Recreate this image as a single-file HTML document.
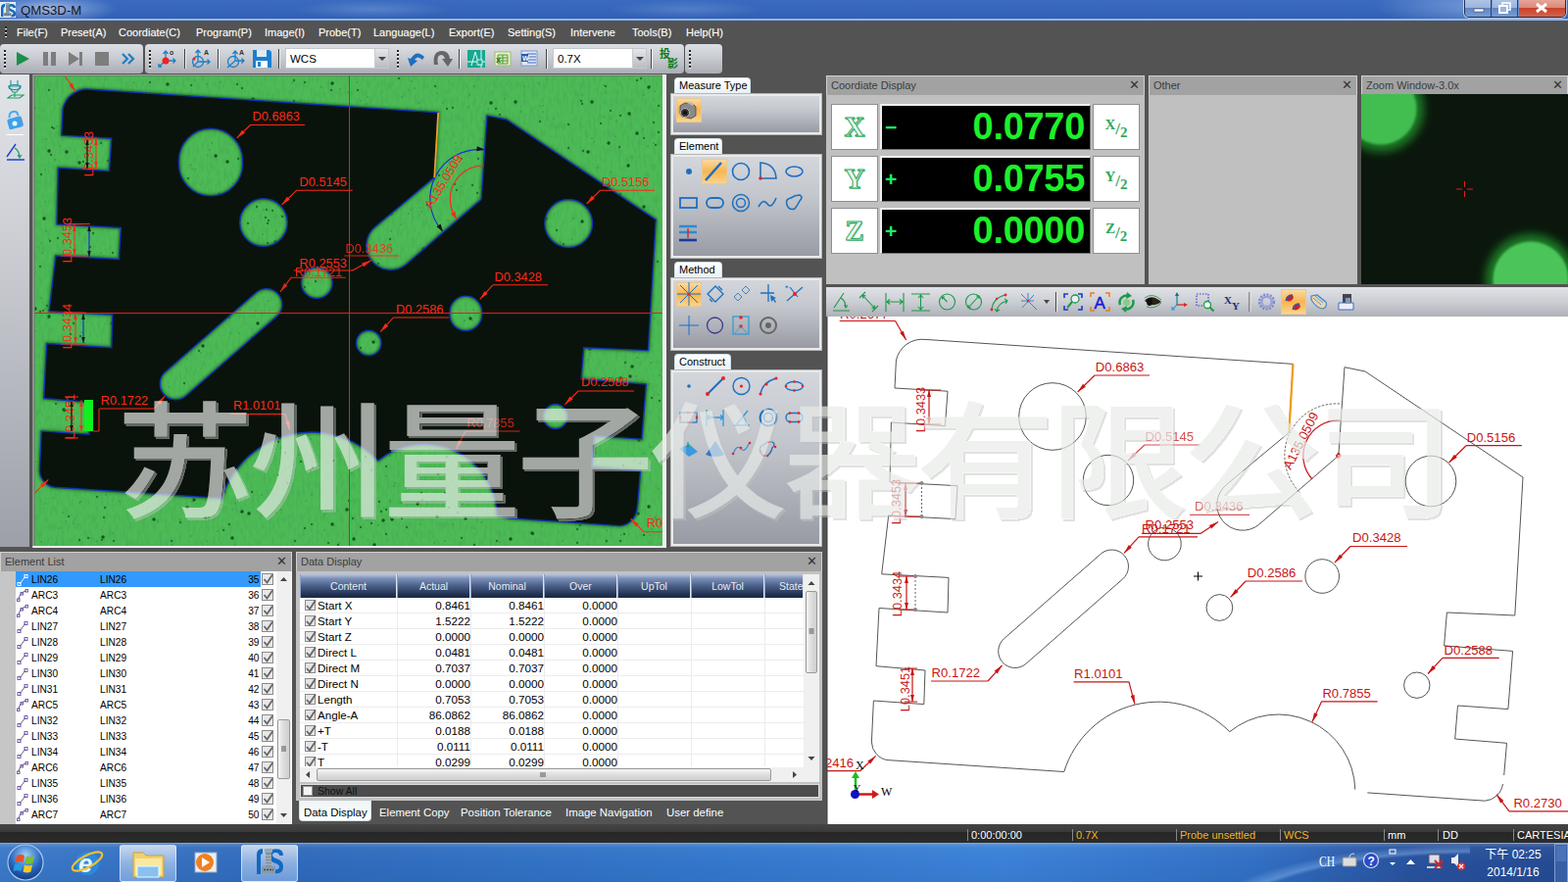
<!DOCTYPE html><html><head><meta charset="utf-8"><title>QMS3D-M</title><style>
*{box-sizing:border-box;margin:0;padding:0}
html,body{width:1600px;height:900px;overflow:hidden;background:#535353;font-family:"Liberation Sans","Noto Sans CJK SC",sans-serif;font-size:11px;color:#000}
.a{position:absolute}
.t{position:absolute;white-space:nowrap;line-height:1}
svg{position:absolute;overflow:visible}
#titlebar{left:0;top:0;width:1600px;height:21px;background:linear-gradient(#3a6bc0,#3565b9 60%,#3160b3);border-bottom:2px solid #8db4ea}
.menu{color:#fff;font-size:11px;top:28px;text-shadow:0 0 1px rgba(255,230,190,.35)}
.tb{top:45px;height:30px;border-radius:4px;background:linear-gradient(#dcdfe4,#c9ccd2 45%,#aaadb4);}
.grip{position:absolute;width:2px;background:repeating-linear-gradient(#222 0 2px,#fff 2px 3px,rgba(0,0,0,0) 3px 4px)}
.sep{position:absolute;width:1px;height:20px;top:50px;background:#444;box-shadow:1px 0 0 #eee}
.combo{position:absolute;top:49px;height:21px;background:#fff;border:1px solid #c4c7cc;font-size:11.5px;line-height:21px;padding-left:4px}
.combo i{position:absolute;right:0;top:0;width:14px;height:19px;background:linear-gradient(#e4e6ea,#b9bcc3);border-left:1px solid #ccc}
.combo i:after{content:"";position:absolute;left:3px;top:8px;border:4px solid transparent;border-top:4px solid #444;border-bottom:none}
.ptitle{position:absolute;background:#a1a2a1;color:#3c3c3c;font-size:11px;border:1px solid #d0d0d0;border-bottom:none;height:20px;line-height:18px;padding-left:4px}
.ptitle b{position:absolute;right:4px;top:0;font-weight:normal;font-size:13px;color:#333}
.pbody{position:absolute;background:#c0c0c0}
.tab{position:absolute;white-space:nowrap;overflow:hidden;background:linear-gradient(#fff,#e6f0f2);border:1px solid #cfe0e4;border-bottom:none;border-radius:4px 4px 0 0;font-size:11px;height:17px;line-height:15px;padding-left:4px;color:#000}
.box{position:absolute;border:2px solid #e9eaec;background:linear-gradient(#d3d6db,#c3c6cc 40%,#989ba4);box-shadow:0 0 0 1px #b5b5b5}
.sel{position:absolute;background:linear-gradient(#fbd9a0,#f7b552 50%,#fbd48c);border:1px solid #e8c890}
.cbtn{position:absolute;background:#fff;border:1px solid #8e8e8e;color:#2fa860;font-family:"Liberation Serif",serif;font-weight:bold;text-align:center}
.disp{position:absolute;background:#000;border:1px solid #777;border-top:2px solid #eee;border-left:2px solid #eee}
.dig{position:absolute;right:5px;top:2px;font-size:38px;font-weight:bold;color:#1df02a;line-height:1;letter-spacing:-0.3px}
.sign{position:absolute;left:3px;top:11px;font-size:21px;font-weight:bold;color:#1df06a;line-height:1}
</style></head><body>
<div id="titlebar" class="a"></div>
<div class="a" style="left:300px;top:0;width:160px;height:19px;background:radial-gradient(ellipse at center,rgba(150,180,230,.35),rgba(150,180,230,0) 70%)"></div>
<div class="a" style="left:620px;top:0;width:160px;height:19px;background:radial-gradient(ellipse at center,rgba(150,180,230,.3),rgba(150,180,230,0) 70%)"></div>
<div class="a" style="left:1380px;top:0;width:220px;height:20px;background:radial-gradient(ellipse 50% 120% at 60% 30%,rgba(170,195,235,.55),rgba(150,180,230,0) 100%)"></div>
<div class="a" style="left:-20px;top:-6px;width:140px;height:30px;background:radial-gradient(ellipse 50% 50% at 50% 50%,rgba(235,242,252,.6),rgba(200,220,245,.25) 60%,rgba(150,180,230,0) 100%)"></div>
<div class="t" style="left:21px;top:4px;font-size:13.2px;color:#151525">QMS3D-M</div>
<svg style="left:0;top:2px" width="17" height="17" viewBox="0 0 17 17"><rect x="0" y="0" width="16" height="16" fill="#e4eef8"/><path d="M1 15V6q0-4 4-4v3q-1.5 0-1.5 1.500v8.500zM11.5 2q4.5 0 4.5 4h-2.500q0-1.5-2-1.500q-1.5 0-1.5 1.200t3 2.300q3.2 1.2 3.2 4q0 3.5-4.7 3.500v-2.500q2 0 2-1.300q0-1.2-3-2.200t-3-3.800q0-3.7 4-3.700z" fill="#1468c0"/><rect x="5.5" y="1" width="4.5" height="2" fill="#9aa8b4"/><rect x="6" y="3" width="3.5" height="8" fill="#7f8f9c"/><rect x="4" y="11" width="7.5" height="3.5" fill="#8a9aa8"/><path d="M5 12.800h5.5" stroke="#445" stroke-dasharray="1.5 1"/></svg>
<div class="a" style="left:1494px;top:-4px;width:104px;height:22px;border:1px solid #1c2f55;border-radius:5px;box-shadow:0 0 0 1px rgba(255,255,255,.55);overflow:hidden;background:#6f93cc"><div class="a" style="left:0;top:0;width:27px;height:22px;background:linear-gradient(#b7c9e6 0,#9bb4dc 50%,#5f86c4 52%,#7fa2d6);border-right:1px solid #2a406c"></div><div class="a" style="left:28px;top:0;width:26px;height:22px;background:linear-gradient(#b7c9e6 0,#9bb4dc 50%,#5f86c4 52%,#7fa2d6);border-right:1px solid #2a406c"></div><div class="a" style="left:55px;top:0;width:48px;height:22px;background:linear-gradient(#eab0a4 0,#dc8878 50%,#c8422c 52%,#d86a50)"></div></div>
<svg style="left:1494px;top:0" width="104" height="18" viewBox="0 0 104 18"><rect x="10" y="9" width="10" height="3" fill="#fff" stroke="#445" stroke-width=".6"/><rect x="39" y="3" width="8" height="7" fill="none" stroke="#fff" stroke-width="1.6"/><rect x="36" y="6" width="8" height="7" fill="#9bb4dc" stroke="#fff" stroke-width="2"/><path d="M74 4l10 8M84 4l-10 8" stroke="#fff" stroke-width="3"/></svg>
<div class="t menu" style="left:17px">File(F)</div>
<div class="t menu" style="left:62px">Preset(A)</div>
<div class="t menu" style="left:121px">Coordiate(C)</div>
<div class="t menu" style="left:200px">Program(P)</div>
<div class="t menu" style="left:270px">Image(I)</div>
<div class="t menu" style="left:325px">Probe(T)</div>
<div class="t menu" style="left:381px">Language(L)</div>
<div class="t menu" style="left:458px">Export(E)</div>
<div class="t menu" style="left:518px">Setting(S)</div>
<div class="t menu" style="left:582px">Intervene</div>
<div class="t menu" style="left:645px">Tools(B)</div>
<div class="t menu" style="left:700px">Help(H)</div>
<div class="grip" style="left:5px;top:27px;height:12px"></div>
<div class="a tb" style="left:0px;width:146px"></div>
<div class="a tb" style="left:148px;width:550px"></div>
<div class="a tb" style="left:699px;width:38px"></div>
<div class="grip" style="left:4px;top:51px;height:19px"></div>
<div class="grip" style="left:152px;top:51px;height:19px"></div>
<div class="grip" style="left:405px;top:51px;height:19px"></div>
<div class="grip" style="left:703px;top:51px;height:19px"></div>
<div class="sep" style="left:188px"></div>
<div class="sep" style="left:222px"></div>
<div class="sep" style="left:284px"></div>
<div class="sep" style="left:468px"></div>
<div class="sep" style="left:557px"></div>
<div class="sep" style="left:664px"></div>
<div class="combo" style="left:291px;width:106px">WCS<i></i></div>
<div class="combo" style="left:564px;width:96px">0.7X<i></i></div>
<div class="t" style="left:673px;top:50px;font-size:11px;color:#0a7a1a;line-height:10px;font-weight:bold">投<br><span style="margin-left:8px">影</span></div>
<svg style="left:0;top:45px" width="740" height="30" viewBox="0 45 740 30">
<path d="M17 53l13 7l-13 7z" fill="#1a9048"/>
<rect x="44" y="53" width="5" height="14" fill="#7d7d7d"/><rect x="52" y="53" width="5" height="14" fill="#7d7d7d"/>
<path d="M70 53l11 7l-11 7z" fill="#7d7d7d"/><rect x="81" y="53" width="3" height="14" fill="#7d7d7d"/>
<rect x="97" y="53" width="14" height="14" fill="#7d7d7d"/>
<path d="M125 55l5 5l-5 5M131 55l5 5l-5 5" stroke="#1e7fc4" stroke-width="2.2" fill="none"/>
<g stroke="#1e7fc4" stroke-width="1.3" fill="none"><path d="M169 62v-10M166.5 55l2.5-3l2.5 3M169 62l-7 6M162 65v3h3M169 62h10M176.5 59.500l2.5 2.500l-2.5 2.5"/></g><circle cx="169" cy="62" r="3.5" fill="#e22"/><text x="173" y="56" font-size="7" fill="#333" font-weight="bold">o</text>
<g stroke="#1e7fc4" stroke-width="1.3" fill="none"><circle cx="202" cy="63" r="5.5"/><path d="M202 63v-12M199.5 54l2.5-3l2.5 3M202 63h12M211.5 60.500l2.5 2.500l-2.5 2.500M202 63l-5 5"/></g><circle cx="198" cy="60" r="1.5" fill="#e22"/><text x="208" y="56" font-size="7" fill="#333" font-weight="bold">A</text>
<g stroke="#1e7fc4" stroke-width="1.3" fill="none"><circle cx="238" cy="63" r="5.5"/><path d="M240 62v-10M237.5 55l2.5-3l2.5 3M240 62h9M246.5 59.500l2.5 2.500l-2.5 2.500M240 62l-8 7"/></g><text x="244" y="56" font-size="7" fill="#333" font-weight="bold">A</text>
<path d="M258 51h17l2 2v16h-19z" fill="#1b7fd0"/><rect x="262" y="51" width="10" height="7" fill="#dfeaf4"/><rect x="261" y="62" width="12" height="7" fill="#fff"/><rect x="263" y="63" width="3" height="5" fill="#1b7fd0"/>
<path d="M417 58q8-8 14 2l3-1l-3 9l-7-6l3-1q-3-5-8 0z" fill="#1e6fc0" transform="translate(850 0) scale(-1 1)"/>
<path d="M443 66q-2-14 8-14q7 0 8 8h3l-5 8l-6-8h3q-1-4-4-4q-5 0-3 10z" fill="#666"/>
<rect x="477" y="51" width="18" height="18" fill="#18a890"/><path d="M481 67l4-14l4 14M477 63h18M491 51v18" stroke="#dff" stroke-width="1" fill="none"/><rect x="487" y="61" width="5" height="5" fill="#18a890" stroke="#fff" stroke-width=".8"/>
<rect x="505" y="53" width="16" height="14" fill="#e7f1dc" stroke="#9bbf6a"/><path d="M508 56h10v9h-10zM508 59h10M508 62h10M513 56v9" stroke="#5a9a2a" stroke-width="1" fill="#d7ebc0"/><text x="506" y="64" font-size="9" font-weight="bold" fill="#2a7a1a">x</text>
<rect x="532" y="52" width="16" height="15" fill="#dfe9f8" stroke="#7a9ad0"/><path d="M538 55h9M538 58h9M538 61h9M538 64h9" stroke="#3a6ab8" stroke-width="1.2"/><rect x="532" y="55" width="7" height="8" fill="#2a5aa8"/><text x="533" y="62" font-size="7" font-weight="bold" fill="#fff">W</text>
</svg>
<div class="a" style="left:0;top:76px;width:30px;height:482px;background:linear-gradient(#e2e4e8,#ccced4 35%,#9da0a8)"></div>
<svg style="left:0;top:76px" width="30" height="110" viewBox="0 76 30 110">
<g stroke="#1aa06a" stroke-width="1.1" fill="none"><path d="M11 82v5M18 82v5M9 88h12l-4 6h-4zM15 94v5"/><ellipse cx="15" cy="89" rx="6" ry="2.5" stroke="#1e7fc4"/><path d="M8 100l4-3h12l-4 3z"/></g>
<rect x="8" y="120" width="15" height="11" rx="2" fill="#3fa0ea" transform="rotate(-15 15 125)"/><path d="M11 119q1-6 6-5q4 1 3 5" stroke="#4aa8f0" stroke-width="2" fill="none" transform="rotate(-15 15 125)"/><circle cx="15" cy="126" r="2.5" fill="#dff"/>
<path d="M6 137.500h18" stroke="#fff" stroke-width="1"/>
<path d="M7 163h18" stroke="#1e40d0" stroke-width="1.5"/><path d="M7 160l9-13" stroke="#1e40d0" stroke-width="1.4"/><path d="M15 151q5 3 5 10M18 158l2 3l2-3" stroke="#1aa06a" stroke-width="1.2" fill="none"/>
</svg>
<svg style="left:0;top:0" width="1600" height="900" viewBox="0 0 1600 900">
<defs>
<filter id="spk" x="0" y="0" width="100%" height="100%"><feTurbulence type="fractalNoise" baseFrequency="0.11" numOctaves="2" seed="7" result="n"/><feColorMatrix in="n" type="matrix" values="0 0 0 0 0  0 0 0 0 0.250  0 0 0 0 0  -9 0 0 0 2.6"/></filter>
<filter id="tex" x="0" y="0" width="100%" height="100%"><feTurbulence type="fractalNoise" baseFrequency="0.5" numOctaves="1" seed="3"/><feColorMatrix type="matrix" values="0 0 0 0 0  0 0 0 0 0  0 0 0 0 0  0.350 0 0 0 -0.080"/></filter>
<filter id="tex2" x="0" y="0" width="100%" height="100%"><feTurbulence type="fractalNoise" baseFrequency="0.35 0.12" numOctaves="2" seed="5"/><feColorMatrix type="matrix" values="0 0 0 0 0.050  0 0 0 0 0.3  0 0 0 0 0.080  0 0.8 0 0 -0.320"/></filter><filter id="bl2"><feGaussianBlur stdDeviation="1.6"/></filter>
<clipPath id="camclip"><rect x="35.5" y="77.6" width="640.5" height="479.4"/></clipPath>
</defs>
<rect x="33.3" y="76" width="646.7" height="483" fill="#a6a6a6"/><rect x="34.7" y="77" width="645.3" height="482" fill="#666"/><rect x="676" y="76" width="4" height="483" fill="#efefef"/><rect x="33.3" y="557" width="646.7" height="2" fill="#efefef"/>
<g clip-path="url(#camclip)">
<rect x="35" y="77" width="641" height="480" fill="#4cbb55"/>
<rect x="35" y="77" width="641" height="480" filter="url(#tex2)"/>
<path d="M325 346h.1M627 301h.1M361 359h.1M153 323h.1M439 458h.1M95 223h.1M93 466h.1M479 97h.1M665 540h.1M454 372h.1M136 84h.1M374 106h.1M157 193h.1M54 300h.1M317 481h.1M368 384h.1M355 395h.1M328 211h.1M674 555h.1M574 417h.1M237 187h.1M220 111h.1M526 269h.1M578 263h.1M649 484h.1M35 178h.1M618 303h.1M663 268h.1M82 379h.1M534 206h.1M91 237h.1M653 441h.1M111 195h.1M100 106h.1M546 162h.1M394 292h.1M157 428h.1M119 386h.1M110 279h.1M171 207h.1M657 463h.1M230 502h.1M170 266h.1M583 385h.1M99 552h.1M172 201h.1M530 235h.1M225 112h.1M93 357h.1M191 366h.1M273 295h.1M650 309h.1M403 493h.1M152 151h.1M617 470h.1M195 168h.1M509 528h.1M161 533h.1M600 367h.1M305 127h.1M60 539h.1M188 415h.1M200 472h.1M417 218h.1M147 423h.1M79 187h.1M394 486h.1M429 212h.1M623 175h.1M46 206h.1M321 106h.1M148 254h.1M402 140h.1M267 505h.1M663 392h.1M478 358h.1M125 94h.1M46 514h.1M484 539h.1M49 382h.1M344 428h.1M239 557h.1M83 339h.1M507 509h.1M507 415h.1M543 516h.1M261 406h.1M612 495h.1M302 456h.1M588 352h.1M436 261h.1M408 369h.1M86 384h.1M672 499h.1M502 263h.1M506 356h.1M317 479h.1M89 437h.1M54 366h.1M343 188h.1M483 316h.1M429 519h.1M199 82h.1M228 403h.1M165 158h.1M616 394h.1M318 505h.1M245 397h.1M162 284h.1M552 516h.1M599 262h.1M409 229h.1M122 315h.1M572 484h.1M491 533h.1M212 158h.1M324 209h.1M172 276h.1M436 314h.1M237 480h.1M664 294h.1M83 92h.1M594 97h.1M489 351h.1M233 457h.1M47 142h.1M327 89h.1M567 191h.1M125 100h.1M438 291h.1M439 391h.1M553 537h.1M474 173h.1M340 163h.1M42 304h.1M493 163h.1M210 243h.1M482 327h.1M429 440h.1M287 457h.1M616 119h.1M633 424h.1M118 295h.1M436 514h.1M277 350h.1M599 459h.1M640 300h.1M452 175h.1M498 470h.1M446 421h.1M172 509h.1M663 546h.1M379 457h.1M240 514h.1M584 244h.1M88 289h.1M388 446h.1M347 91h.1M554 108h.1M548 160h.1M250 455h.1M125 148h.1M366 424h.1M573 408h.1M641 313h.1M643 118h.1M177 330h.1M221 427h.1M445 328h.1M576 346h.1M235 260h.1M577 509h.1M168 485h.1M656 329h.1M402 173h.1M379 319h.1M423 90h.1M656 325h.1M292 462h.1M396 313h.1M478 109h.1M380 276h.1M648 520h.1M208 304h.1M116 285h.1M558 509h.1M340 229h.1M158 374h.1M628 139h.1M535 88h.1M159 186h.1M475 232h.1M263 374h.1M102 428h.1M114 322h.1M196 172h.1M375 287h.1M276 275h.1M374 154h.1M166 380h.1M444 331h.1M581 371h.1M584 189h.1M510 466h.1M614 229h.1M237 520h.1M175 556h.1M604 141h.1M188 426h.1M201 124h.1M568 279h.1M541 137h.1M293 406h.1M46 173h.1M472 514h.1M656 132h.1M359 441h.1M357 406h.1M156 111h.1M103 95h.1M389 324h.1M400 147h.1M153 175h.1M574 552h.1M629 123h.1M75 534h.1M331 444h.1M244 301h.1M365 283h.1M420 83h.1M484 482h.1M151 295h.1M509 272h.1M160 156h.1M364 84h.1M608 462h.1M487 490h.1M438 271h.1M419 319h.1M665 463h.1M201 514h.1M512 450h.1M557 272h.1M610 499h.1M480 445h.1M526 272h.1M498 111h.1M254 302h.1M42 248h.1M444 377h.1M184 530h.1M462 239h.1M458 350h.1M377 264h.1M676 385h.1M485 443h.1M663 88h.1M429 432h.1M200 270h.1M67 171h.1M276 124h.1M196 512h.1M388 321h.1M655 350h.1M673 383h.1M554 114h.1M418 441h.1M64 523h.1M138 303h.1M143 315h.1M427 105h.1M641 279h.1M373 364h.1M269 214h.1M455 346h.1M217 421h.1M225 84h.1M192 98h.1M135 439h.1M285 508h.1M515 101h.1M669 530h.1M82 512h.1M310 306h.1M659 194h.1M370 527h.1M498 302h.1M662 469h.1M422 132h.1M435 296h.1M166 102h.1M374 137h.1M319 398h.1M327 203h.1M408 278h.1M534 332h.1M674 534h.1M506 191h.1M108 505h.1M538 377h.1M265 207h.1M474 348h.1M414 381h.1M518 168h.1M195 547h.1M622 499h.1M60 106h.1M209 281h.1M435 126h.1M382 112h.1M90 402h.1M388 380h.1M274 307h.1M170 242h.1M512 480h.1M83 134h.1M554 376h.1M528 179h.1M307 201h.1M554 254h.1M454 552h.1M244 340h.1M513 519h.1M309 254h.1M97 497h.1M85 117h.1M397 310h.1M474 220h.1M532 114h.1M172 395h.1M87 223h.1M500 410h.1M216 146h.1M264 425h.1M270 133h.1M490 350h.1M624 528h.1M620 287h.1M550 223h.1M239 269h.1M634 506h.1M194 251h.1M269 251h.1M289 263h.1M160 348h.1M546 336h.1M571 347h.1M148 441h.1M600 212h.1M49 325h.1M384 349h.1M654 390h.1M551 108h.1M386 455h.1M89 116h.1M507 509h.1M89 381h.1M127 435h.1M451 195h.1M176 444h.1M369 444h.1M288 239h.1M656 400h.1M351 335h.1M497 417h.1M622 274h.1M565 397h.1M582 464h.1M569 504h.1M649 384h.1M371 418h.1M549 279h.1M305 147h.1M510 553h.1M276 157h.1M166 281h.1M222 542h.1M73 225h.1M109 388h.1M532 163h.1M75 297h.1M409 513h.1M58 129h.1M153 181h.1M186 421h.1M416 185h.1M154 212h.1M146 441h.1M235 340h.1M559 307h.1M202 503h.1M621 241h.1M386 536h.1M344 183h.1M67 532h.1M549 262h.1M373 325h.1M211 552h.1M456 191h.1M42 304h.1M273 459h.1M492 368h.1M136 152h.1M241 202h.1M592 325h.1M443 554h.1M206 334h.1M132 447h.1M36 471h.1M577 472h.1M88 207h.1M494 124h.1M343 302h.1M647 359h.1M585 223h.1M541 277h.1M623 121h.1M565 177h.1M383 329h.1M136 476h.1M235 226h.1M84 224h.1M334 420h.1M266 407h.1M103 266h.1M331 541h.1M567 391h.1M43 258h.1M490 191h.1M397 297h.1M42 553h.1M547 176h.1M430 216h.1M276 336h.1M226 239h.1M286 397h.1M199 173h.1M504 235h.1M641 347h.1M499 236h.1M565 121h.1M125 122h.1M469 417h.1M150 270h.1M571 362h.1M93 186h.1M136 137h.1M296 112h.1M625 282h.1M363 388h.1M527 471h.1M282 236h.1M299 84h.1M292 413h.1M664 456h.1M458 369h.1M47 236h.1M254 389h.1M103 258h.1M362 456h.1M564 370h.1M136 445h.1M614 340h.1M261 317h.1M126 419h.1M668 325h.1M494 478h.1M161 531h.1M437 172h.1M88 194h.1M405 412h.1M246 523h.1M267 299h.1M115 544h.1M122 511h.1M383 346h.1M394 204h.1M618 553h.1M559 366h.1M114 473h.1M220 508h.1M189 352h.1M568 166h.1M386 114h.1M56 163h.1M668 528h.1M457 225h.1M465 431h.1M280 361h.1M550 85h.1M163 302h.1M127 262h.1M400 160h.1M368 204h.1M399 236h.1M446 95h.1M465 146h.1M650 365h.1M336 274h.1M435 408h.1M521 438h.1M346 554h.1M572 487h.1M297 285h.1M398 512h.1M372 329h.1M312 511h.1M241 103h.1M500 509h.1M504 364h.1M517 223h.1M415 111h.1M115 292h.1M357 267h.1M68 411h.1M372 192h.1M231 267h.1M186 110h.1M619 541h.1M462 493h.1M305 464h.1M177 435h.1M398 511h.1M98 457h.1M114 335h.1M645 77h.1M191 221h.1M243 107h.1M609 468h.1M290 248h.1M410 99h.1M55 508h.1M232 316h.1M634 546h.1M338 176h.1M224 520h.1M610 171h.1M572 247h.1M338 160h.1M599 555h.1M164 381h.1M158 499h.1M67 128h.1M500 227h.1M612 494h.1M492 142h.1M481 527h.1M320 115h.1M178 224h.1M490 171h.1M151 190h.1M461 456h.1M274 395h.1M602 360h.1M182 221h.1M629 397h.1M212 384h.1M93 549h.1M317 331h.1M375 99h.1M419 214h.1M196 463h.1M91 214h.1M519 195h.1M214 340h.1M154 508h.1M668 93h.1M331 437h.1M282 523h.1M355 163h.1M391 387h.1M266 393h.1M537 325h.1M359 483h.1M474 327h.1M645 160h.1M535 156h.1M425 190h.1M317 448h.1M539 457h.1M186 312h.1M177 355h.1M355 94h.1M418 420h.1M402 496h.1M150 150h.1M46 315h.1M314 289h.1M204 460h.1M81 513h.1M400 338h.1M542 191h.1M129 226h.1M62 228h.1M433 329h.1M205 360h.1M92 471h.1M145 199h.1M137 409h.1M568 455h.1M74 274h.1M269 181h.1M657 97h.1M349 442h.1M667 146h.1M327 435h.1M60 192h.1M606 145h.1M287 220h.1M307 114h.1M57 555h.1M524 429h.1M182 199h.1M389 193h.1M331 525h.1M268 239h.1M664 370h.1M60 270h.1M452 105h.1M255 410h.1M589 361h.1M603 299h.1M287 482h.1M279 452h.1M173 244h.1M153 341h.1M140 175h.1M172 302h.1M233 292h.1M672 403h.1M588 175h.1M280 112h.1M478 251h.1M211 86h.1M152 203h.1M287 520h.1M493 206h.1M266 151h.1M635 250h.1M526 424h.1M616 87h.1M241 262h.1M88 501h.1M243 447h.1M368 103h.1M288 191h.1M61 149h.1M417 92h.1M235 281h.1M384 142h.1M488 202h.1M500 397h.1M129 175h.1M215 419h.1M295 263h.1M590 186h.1M222 243h.1M173 97h.1M51 380h.1M398 465h.1M660 220h.1M465 518h.1M174 408h.1M462 535h.1M592 190h.1M440 120h.1M309 265h.1M74 261h.1M245 316h.1M214 153h.1M293 305h.1M142 396h.1M189 122h.1M254 280h.1M132 357h.1M485 343h.1M484 88h.1M286 252h.1M75 271h.1M70 315h.1M411 302h.1M244 199h.1M50 244h.1M607 349h.1M203 398h.1M154 302h.1M429 535h.1M267 354h.1M639 447h.1M437 375h.1M298 276h.1M212 475h.1M599 260h.1M618 95h.1M122 320h.1M233 250h.1M661 149h.1M158 187h.1M471 190h.1M36 338h.1" stroke="#2f9038" stroke-width="1.4" stroke-linecap="round" fill="none"/>
<path d="M287 192h.1M351 389h.1M386 377h.1M394 476h.1M656 237h.1M257 502h.1M236 421h.1M481 407h.1M653 473h.1M137 375h.1M350 348h.1M272 214h.1M515 333h.1M187 197h.1M243 162h.1M364 137h.1M76 110h.1M101 415h.1M107 294h.1M530 308h.1M139 493h.1M593 103h.1M198 321h.1M546 265h.1M494 198h.1M494 234h.1M249 441h.1M575 475h.1M399 279h.1M488 376h.1M568 462h.1M115 258h.1M464 188h.1M153 84h.1M410 529h.1M657 141h.1M476 278h.1M440 267h.1M633 552h.1M66 419h.1M111 97h.1M218 428h.1M672 135h.1M247 90h.1M383 309h.1M274 225h.1M548 480h.1M217 265h.1M431 444h.1M664 264h.1M480 339h.1M548 148h.1M147 128h.1M633 198h.1M348 135h.1M242 86h.1M398 146h.1M436 209h.1M181 308h.1M270 202h.1M68 108h.1M607 225h.1M85 165h.1M345 556h.1M165 493h.1M345 276h.1M552 267h.1M72 341h.1M456 376h.1M213 528h.1M589 554h.1M319 477h.1M500 161h.1M52 158h.1M111 113h.1M265 439h.1M234 324h.1M42 178h.1M650 82h.1M373 466h.1M543 430h.1M291 462h.1M566 445h.1M667 125h.1M644 270h.1M487 197h.1M618 88h.1M405 186h.1M284 254h.1M456 466h.1M269 383h.1M262 211h.1M615 231h.1M95 238h.1M510 178h.1M511 339h.1M471 162h.1M103 146h.1M260 284h.1M41 318h.1M294 231h.1M379 534h.1M166 500h.1M241 439h.1M104 551h.1M311 539h.1M176 273h.1M488 162h.1M210 402h.1M642 232h.1M153 248h.1M669 148h.1M442 258h.1M448 179h.1M430 503h.1M584 379h.1M359 350h.1M108 479h.1M477 295h.1M462 278h.1M282 187h.1M420 352h.1M365 92h.1M437 291h.1M415 362h.1M632 150h.1M335 554h.1M508 227h.1M507 552h.1M293 493h.1M116 552h.1M350 189h.1M574 389h.1M636 475h.1M546 323h.1M672 108h.1M593 419h.1M196 464h.1M326 334h.1M590 171h.1M214 386h.1M82 343h.1M540 313h.1M190 461h.1M583 447h.1M387 512h.1M546 150h.1M270 125h.1M59 243h.1M589 477h.1M110 164h.1M284 485h.1M431 510h.1M81 551h.1M168 379h.1M597 426h.1M161 398h.1M311 84h.1M253 228h.1M439 211h.1M422 411h.1M151 138h.1M480 301h.1M118 133h.1M638 370h.1M264 171h.1M673 409h.1M507 250h.1M234 273h.1M129 380h.1M307 471h.1M297 296h.1M360 529h.1M257 415h.1M186 355h.1M218 496h.1M219 487h.1M469 295h.1M633 263h.1M511 366h.1M322 108h.1M304 212h.1M318 535h.1M223 411h.1M466 194h.1M299 140h.1M609 198h.1M305 241h.1M561 485h.1M414 339h.1M99 507h.1M92 252h.1M275 424h.1M464 242h.1M611 533h.1M50 381h.1M336 251h.1M333 229h.1M465 368h.1M657 546h.1M671 267h.1M566 389h.1M484 556h.1M78 299h.1M292 392h.1M175 552h.1M169 255h.1M127 266h.1M510 117h.1M142 388h.1M434 433h.1M197 466h.1M503 449h.1M112 302h.1M45 490h.1M640 507h.1M51 246h.1M379 333h.1M106 456h.1M228 321h.1M115 350h.1M118 119h.1M363 218h.1M533 195h.1M300 103h.1M175 294h.1M393 298h.1M580 127h.1M580 151h.1M657 329h.1M296 371h.1M589 540h.1M300 82h.1M134 470h.1M506 419h.1M135 332h.1M53 130h.1M228 541h.1M447 484h.1M65 277h.1M85 202h.1M107 518h.1M246 312h.1M454 503h.1M642 350h.1M356 511h.1M288 221h.1M509 201h.1M271 283h.1M341 249h.1M311 293h.1M67 478h.1M75 330h.1M386 269h.1M178 125h.1M273 228h.1M345 188h.1M515 311h.1M41 272h.1M654 80h.1M415 538h.1M269 364h.1M271 222h.1M425 360h.1M237 316h.1M366 439h.1M69 122h.1M197 207h.1M545 281h.1M586 270h.1M218 403h.1M90 549h.1M568 235h.1M238 470h.1M540 385h.1M71 444h.1M66 377h.1M389 522h.1M444 88h.1M634 438h.1M407 80h.1M507 278h.1M471 549h.1M623 113h.1M536 288h.1M517 258h.1M322 287h.1M111 231h.1M506 111h.1M109 477h.1M462 340h.1M108 134h.1M234 535h.1M394 520h.1M170 276h.1M379 480h.1M114 496h.1M338 92h.1M312 258h.1M467 523h.1M351 408h.1M284 451h.1M102 433h.1M142 358h.1M165 243h.1M140 245h.1M414 327h.1M284 353h.1M575 249h.1M409 308h.1M664 234h.1M482 189h.1M202 428h.1M404 200h.1M76 473h.1M277 421h.1M312 373h.1M394 545h.1M618 296h.1M347 188h.1M518 126h.1M231 484h.1M57 412h.1M399 342h.1M248 150h.1M644 444h.1M551 124h.1M538 182h.1M163 334h.1M426 135h.1M525 357h.1M612 520h.1M477 252h.1M645 422h.1M221 489h.1M501 204h.1M195 87h.1M379 199h.1M223 198h.1M119 310h.1M210 214h.1M213 321h.1M595 154h.1M586 487h.1M426 338h.1M505 334h.1M458 518h.1M532 202h.1M70 527h.1M267 455h.1M185 294h.1M272 427h.1M640 320h.1M398 244h.1M184 533h.1M106 528h.1M456 111h.1M613 126h.1M397 134h.1M669 225h.1M594 106h.1M462 110h.1M54 351h.1M665 406h.1M583 454h.1M369 114h.1M373 166h.1M373 247h.1M355 172h.1M487 277h.1M346 115h.1M347 345h.1M658 346h.1M121 221h.1M250 414h.1M637 545h.1M644 521h.1M585 526h.1M48 312h.1M414 406h.1M428 371h.1M633 118h.1M368 538h.1M55 131h.1M592 536h.1M50 92h.1M567 407h.1M368 355h.1M520 465h.1M35 110h.1M544 545h.1M569 273h.1M250 243h.1M45 447h.1M203 358h.1M372 238h.1M468 295h.1M185 500h.1M148 149h.1M197 307h.1M537 237h.1M188 391h.1M202 328h.1M198 498h.1M153 188h.1M228 235h.1M501 401h.1M542 336h.1M85 443h.1M192 182h.1M301 552h.1M273 248h.1M619 552h.1M283 142h.1M541 453h.1M252 456h.1M278 215h.1M415 433h.1M340 470h.1M44 317h.1" stroke="#1f7429" stroke-width="2.3" stroke-linecap="round" fill="none"/>
<path d="M279 108h.1M621 146h.1M167 499h.1M651 524h.1M254 524h.1M126 420h.1M641 169h.1M122 403h.1M601 426h.1M643 295h.1M274 135h.1M210 528h.1M81 166h.1M258 101h.1M232 165h.1M114 330h.1M381 349h.1M524 330h.1M642 116h.1M178 114h.1M233 442h.1M627 319h.1M138 236h.1M399 218h.1M543 544h.1M330 366h.1M577 300h.1M157 530h.1M662 89h.1M524 269h.1M68 155h.1M146 430h.1M171 86h.1M176 461h.1M355 390h.1M333 165h.1M45 223h.1M62 202h.1M432 254h.1M338 376h.1M238 248h.1M602 356h.1M302 336h.1M330 237h.1M621 189h.1M635 486h.1M600 155h.1M361 550h.1M220 159h.1M499 190h.1M409 153h.1M642 213h.1M97 407h.1M257 345h.1M354 520h.1M365 259h.1M36 315h.1M207 353h.1M440 299h.1M93 316h.1M344 385h.1M657 211h.1M319 118h.1M548 190h.1M566 460h.1M198 510h.1M358 282h.1M391 531h.1M349 308h.1M221 481h.1M357 241h.1M161 180h.1M570 463h.1M662 517h.1M474 460h.1M491 466h.1M549 162h.1M557 223h.1M191 518h.1M50 323h.1M255 457h.1M426 514h.1M633 386h.1M76 397h.1M105 548h.1M594 226h.1M154 410h.1M521 550h.1M434 137h.1M501 105h.1M591 446h.1M538 496h.1M400 530h.1M445 313h.1M281 247h.1M50 154h.1M545 187h.1M454 449h.1M480 325h.1M238 208h.1M155 388h.1M475 529h.1M247 522h.1M619 216h.1M645 374h.1M652 449h.1M249 211h.1M370 311h.1M58 491h.1M378 304h.1M512 197h.1M163 356h.1M190 234h.1M80 102h.1M263 330h.1M643 384h.1M301 272h.1M186 304h.1M650 136h.1M313 406h.1M524 343h.1M446 527h.1M614 198h.1M382 556h.1M373 168h.1M526 104h.1M131 342h.1M210 422h.1M501 230h.1M527 388h.1M488 296h.1M312 128h.1M339 535h.1M604 104h.1M81 206h.1M480 287h.1M117 281h.1M402 434h.1M293 389h.1M472 373h.1M65 418h.1M117 103h.1M339 85h.1M82 265h.1M335 128h.1M646 486h.1M347 359h.1M237 549h.1M112 223h.1M177 493h.1" stroke="#13561c" stroke-width="3.3" stroke-linecap="round" fill="none"/>
<path d="M92.1 91.2L447.2 114.9L443.3 181.1L383.1 231.2A23.5 23.5 0 0 0 414.2 270.0L491.1 203.4L497.0 118.0L516.8 122.0L669.2 224.2L661.4 357.6L595.7 354.8L593.1 386.8L659.3 392.1L654.9 448.1L606.2 444.7L603.6 476.8L653.5 480.9L650.9 511.8L649.8 520.3A18.9 18.9 0 0 1 632.5 536.6L519.0 528.8L507.2 525.6A74.3 74.3 0 0 0 386.0 469.9A95.6 95.6 0 0 0 226.2 508.5L56.1 497.3A18.0 18.0 0 0 1 40.4 479.7L42.3 439.9L90.9 443.3L92.1 410.6L44.7 406.5L47.6 350.5L113.8 354.8L114.8 321.1L50.1 317.7L56.8 261.1L121.4 264.5L123.3 232.5L58.0 228.9L59.3 171.2L111.4 174.6L113.8 141.2L62.7 138.1L64.0 111.6A25.5 25.5 0 0 1 92.1 91.2ZM182.6 165.6a32.5 32.5 0 1 0 64.9 0a32.5 32.5 0 1 0 -64.9 0ZM244.7 227.1a24.3 24.3 0 1 0 48.6 0a24.3 24.3 0 1 0 -48.6 0ZM555.8 228.0a24.4 24.4 0 1 0 48.8 0a24.4 24.4 0 1 0 -48.8 0ZM307.4 288.6a15.9 15.9 0 1 0 31.8 0a15.9 15.9 0 1 0 -31.8 0ZM459.0 319.8a16.4 16.4 0 1 0 32.7 0a16.4 16.4 0 1 0 -32.7 0ZM363.6 350.0a12.7 12.7 0 1 0 25.4 0a12.7 12.7 0 1 0 -25.4 0ZM554.3 425.0a12.5 12.5 0 1 0 25.0 0a12.5 12.5 0 1 0 -25.0 0ZM261.7 298.2L168.2 380.0A16.1 16.1 0 0 0 189.4 404.2L282.9 322.4A16.1 16.1 0 0 0 261.7 298.2Z" fill="#0f3a14" fill-rule="evenodd" stroke="#1d6a26" stroke-width="3" filter="url(#bl2)"/>
<path d="M92.1 91.2L447.2 114.9L443.3 181.1L383.1 231.2A23.5 23.5 0 0 0 414.2 270.0L491.1 203.4L497.0 118.0L516.8 122.0L669.2 224.2L661.4 357.6L595.7 354.8L593.1 386.8L659.3 392.1L654.9 448.1L606.2 444.7L603.6 476.8L653.5 480.9L650.9 511.8L649.8 520.3A18.9 18.9 0 0 1 632.5 536.6L519.0 528.8L507.2 525.6A74.3 74.3 0 0 0 386.0 469.9A95.6 95.6 0 0 0 226.2 508.5L56.1 497.3A18.0 18.0 0 0 1 40.4 479.7L42.3 439.9L90.9 443.3L92.1 410.6L44.7 406.5L47.6 350.5L113.8 354.8L114.8 321.1L50.1 317.7L56.8 261.1L121.4 264.5L123.3 232.5L58.0 228.9L59.3 171.2L111.4 174.6L113.8 141.2L62.7 138.1L64.0 111.6A25.5 25.5 0 0 1 92.1 91.2ZM182.6 165.6a32.5 32.5 0 1 0 64.9 0a32.5 32.5 0 1 0 -64.9 0ZM244.7 227.1a24.3 24.3 0 1 0 48.6 0a24.3 24.3 0 1 0 -48.6 0ZM555.8 228.0a24.4 24.4 0 1 0 48.8 0a24.4 24.4 0 1 0 -48.8 0ZM307.4 288.6a15.9 15.9 0 1 0 31.8 0a15.9 15.9 0 1 0 -31.8 0ZM459.0 319.8a16.4 16.4 0 1 0 32.7 0a16.4 16.4 0 1 0 -32.7 0ZM363.6 350.0a12.7 12.7 0 1 0 25.4 0a12.7 12.7 0 1 0 -25.4 0ZM554.3 425.0a12.5 12.5 0 1 0 25.0 0a12.5 12.5 0 1 0 -25.0 0ZM261.7 298.2L168.2 380.0A16.1 16.1 0 0 0 189.4 404.2L282.9 322.4A16.1 16.1 0 0 0 261.7 298.2Z" fill="#0a130b" fill-rule="evenodd"/>
<path d="M92.1 91.2L447.2 114.9L443.3 181.1L383.1 231.2A23.5 23.5 0 0 0 414.2 270.0L491.1 203.4L497.0 118.0L516.8 122.0L669.2 224.2L661.4 357.6L595.7 354.8L593.1 386.8L659.3 392.1L654.9 448.1L606.2 444.7L603.6 476.8L653.5 480.9L650.9 511.8L649.8 520.3A18.9 18.9 0 0 1 632.5 536.6L519.0 528.8L507.2 525.6A74.3 74.3 0 0 0 386.0 469.9A95.6 95.6 0 0 0 226.2 508.5L56.1 497.3A18.0 18.0 0 0 1 40.4 479.7L42.3 439.9L90.9 443.3L92.1 410.6L44.7 406.5L47.6 350.5L113.8 354.8L114.8 321.1L50.1 317.7L56.8 261.1L121.4 264.5L123.3 232.5L58.0 228.9L59.3 171.2L111.4 174.6L113.8 141.2L62.7 138.1L64.0 111.6A25.5 25.5 0 0 1 92.1 91.2ZM182.6 165.6a32.5 32.5 0 1 0 64.9 0a32.5 32.5 0 1 0 -64.9 0ZM244.7 227.1a24.3 24.3 0 1 0 48.6 0a24.3 24.3 0 1 0 -48.6 0ZM555.8 228.0a24.4 24.4 0 1 0 48.8 0a24.4 24.4 0 1 0 -48.8 0ZM307.4 288.6a15.9 15.9 0 1 0 31.8 0a15.9 15.9 0 1 0 -31.8 0ZM459.0 319.8a16.4 16.4 0 1 0 32.7 0a16.4 16.4 0 1 0 -32.7 0ZM363.6 350.0a12.7 12.7 0 1 0 25.4 0a12.7 12.7 0 1 0 -25.4 0ZM554.3 425.0a12.5 12.5 0 1 0 25.0 0a12.5 12.5 0 1 0 -25.0 0ZM261.7 298.2L168.2 380.0A16.1 16.1 0 0 0 189.4 404.2L282.9 322.4A16.1 16.1 0 0 0 261.7 298.2Z" fill="none" stroke="#1232c0" stroke-width="1.4" opacity=".92"/>
<path d="M35 319.500H676M356.5 77V557" stroke="#e81c1c" stroke-width="1"/>
<g opacity="1"><path d="M255.5 127.5H311M255.5 127.5L241.7 140.8" stroke="#ff2818" stroke-width="1.1" fill="none"/><path d="M241.7 140.8L247.1 132.7L250.0 135.7Z" fill="#ff2818"/><text x="257.5" y="123" font-size="12.8" fill="#ff2818" font-family='"Liberation Sans",sans-serif'>D0.6863</text></g>
<g opacity="1"><path d="M302.8 194.2H359.7M302.8 194.2L287.5 208.9" stroke="#ff2818" stroke-width="1.1" fill="none"/><path d="M287.5 208.9L292.9 200.8L295.8 203.8Z" fill="#ff2818"/><text x="305.5" y="190" font-size="12.8" fill="#ff2818" font-family='"Liberation Sans",sans-serif'>D0.5145</text></g>
<g opacity="1"><path d="M612.5 194.2H668M612.5 194.2L598.6 208" stroke="#ff2818" stroke-width="1.1" fill="none"/><path d="M598.6 208.0L603.9 199.8L606.8 202.8Z" fill="#ff2818"/><text x="614" y="190" font-size="12.8" fill="#ff2818" font-family='"Liberation Sans",sans-serif'>D0.5156</text></g>
<g opacity="0.85"><path d="M351.4 261H407M351.4 261L351.4 261" stroke="#ff2818" stroke-width="1.1" fill="none"/><path d="M351.4 261.0L351.4 261.0L351.4 261.0Z" fill="#ff2818"/><text x="352.5" y="257.5" font-size="12.8" fill="#ff2818" font-family='"Liberation Sans",sans-serif'>D0.3436</text></g>
<g opacity="1"><path d="M300 276H359.7M359.7 276L378.6 265.8" stroke="#ff2818" stroke-width="1.1" fill="none"/><path d="M378.6 265.8L371.2 272.2L369.2 268.5Z" fill="#ff2818"/><text x="305.5" y="273" font-size="12.8" fill="#ff2818" font-family='"Liberation Sans",sans-serif'>R0.2553</text></g>
<g opacity="0.9"><path d="M297 283.3H352.8M297 283.3L286 297.8" stroke="#ff2818" stroke-width="1.1" fill="none"/><path d="M286.0 297.8L290.1 289.0L293.4 291.5Z" fill="#ff2818"/><text x="301" y="282" font-size="12.8" fill="#ff2818" font-family='"Liberation Sans",sans-serif'>R0.1721</text></g>
<g opacity="1"><path d="M502.8 290.8H559M502.8 290.8L489.7 305.5" stroke="#ff2818" stroke-width="1.1" fill="none"/><path d="M489.7 305.5L494.5 297.0L497.6 299.8Z" fill="#ff2818"/><text x="504.5" y="286.7" font-size="12.8" fill="#ff2818" font-family='"Liberation Sans",sans-serif'>D0.3428</text></g>
<g opacity="1"><path d="M401.4 324H458M401.4 324L388.3 338.6" stroke="#ff2818" stroke-width="1.1" fill="none"/><path d="M388.3 338.6L393.1 330.1L396.2 332.9Z" fill="#ff2818"/><text x="404" y="320" font-size="12.8" fill="#ff2818" font-family='"Liberation Sans",sans-serif'>D0.2586</text></g>
<g opacity="1"><path d="M590 399H647M590 399L576.4 412.8" stroke="#ff2818" stroke-width="1.1" fill="none"/><path d="M576.4 412.8L581.6 404.6L584.6 407.5Z" fill="#ff2818"/><text x="593" y="394" font-size="12.8" fill="#ff2818" font-family='"Liberation Sans",sans-serif'>D0.2588</text></g>
<g opacity="0.8"><path d="M475 440H530.6M475 440L465.3 458.6" stroke="#ff2818" stroke-width="1.1" fill="none"/><path d="M465.3 458.6L467.8 449.2L471.6 451.1Z" fill="#ff2818"/><text x="476.4" y="435.6" font-size="12.8" fill="#ff2818" font-family='"Liberation Sans",sans-serif'>R0.7855</text></g>
<g opacity="1"><path d="M235.5 422.5H291M291 422.5L295.8 439" stroke="#ff2818" stroke-width="1.1" fill="none"/><path d="M295.8 439.0L291.1 430.5L295.2 429.3Z" fill="#ff2818"/><text x="238" y="417.8" font-size="12.8" fill="#ff2818" font-family='"Liberation Sans",sans-serif'>R1.0101</text></g>
<g opacity="1"><path d="M101.4 417H157M157 417L168 404.4" stroke="#ff2818" stroke-width="1.1" fill="none"/><path d="M168.0 404.4L163.3 412.9L160.2 410.2Z" fill="#ff2818"/><text x="102.8" y="413.3" font-size="12.8" fill="#ff2818" font-family='"Liberation Sans",sans-serif'>R0.1722</text></g>
<g opacity="1"><path d="M657 542.8H680M657 542.8L643.6 529.4" stroke="#ff2818" stroke-width="1.1" fill="none"/><path d="M643.6 529.4L651.8 534.6L648.8 537.6Z" fill="#ff2818"/><text x="659.7" y="538" font-size="12.8" fill="#ff2818" font-family='"Liberation Sans",sans-serif'>R0</text></g>
<path d="M66.7 78L77.2 93.6" stroke="#ff2818" stroke-width="1.1"/><path d="M77.2 93.6L70.2 86.9L73.6 84.5Z" fill="#ff2818"/>
<path d="M35 503.600L49.3 489.4" stroke="#ff2818" stroke-width="1.1"/><path d="M49.3 489.4L44.0 497.6L41.1 494.6Z" fill="#ff2818"/>
<path d="M494.4 153A50 50 0 0 0 451.4 235.8" stroke="#1434c8" stroke-width="1.2" fill="none"/>
<path d="M494.5 152.5L486.3 154.2L486.8 149.3Z" fill="#111"/><path d="M452.0 236.5L445.5 231.2L449.6 228.5Z" fill="#111"/>
<path d="M493.6 169A34 34 0 0 0 465.8 223" stroke="#ff2818" stroke-width="1.2" fill="none"/><path d="M466.0 224.0L460.0 218.2L464.4 215.8Z" fill="#ff2818"/>
<text transform="translate(440 214) rotate(-58.5)" font-size="12.8" fill="#ff2818">A135.0509</text>
<path d="M447.2 114.9L443.3 181.1" stroke="#f0a020" stroke-width="1.8"/>
<text transform="translate(95 157) rotate(-90)" text-anchor="middle" font-size="12.8" fill="#ff2818" opacity="1">L0.3433</text>
<path d="M84 141H99M84 172H99M98 141V172" stroke="#ff2818" stroke-width="1"/><path d="M98.0 142.0L99.8 148.0L96.2 148.0Z" fill="#ff2818"/><path d="M98.0 171.0L96.2 165.0L99.8 165.0Z" fill="#ff2818"/>
<path d="M89 143V172" stroke="#111" stroke-width="1.2"/><path d="M89.0 142.0L90.8 148.0L87.2 148.0Z" fill="#111"/><path d="M89.0 172.0L87.2 166.0L90.8 166.0Z" fill="#111"/>
<text transform="translate(73 245) rotate(-90)" text-anchor="middle" font-size="12.8" fill="#ff2818" opacity="1">L0.3453</text>
<path d="M66 228.500H92M62 261H92M76 229V261" stroke="#ff2818" stroke-width="1"/><path d="M76.0 230.0L77.8 236.0L74.2 236.0Z" fill="#ff2818"/><path d="M76.0 260.0L74.2 254.0L77.8 254.0Z" fill="#ff2818"/>
<path d="M91 231V262" stroke="#1434c8" stroke-width="1.2"/><path d="M91.0 230.0L92.8 236.0L89.2 236.0Z" fill="#111"/><path d="M91.0 262.0L89.2 256.0L92.8 256.0Z" fill="#111"/>
<text transform="translate(73 333) rotate(-90)" text-anchor="middle" font-size="12.8" fill="#ff2818" opacity="1">L0.3434</text>
<path d="M66 319H88M62 351H88M77 319V351" stroke="#ff2818" stroke-width="1"/><path d="M77.0 320.0L78.8 326.0L75.2 326.0Z" fill="#ff2818"/><path d="M77.0 350.0L75.2 344.0L78.8 344.0Z" fill="#ff2818"/>
<path d="M85 320V350" stroke="#1434c8" stroke-width="1.2"/><path d="M85.0 320.0L86.8 326.0L83.2 326.0Z" fill="#111"/><path d="M85.0 350.0L83.2 344.0L86.8 344.0Z" fill="#111"/>
<text transform="translate(76 425) rotate(-90)" text-anchor="middle" font-size="12.8" fill="#ff2818" opacity="1">L0.3451</text>
<rect x="86" y="408" width="9" height="32" fill="#10f020"/>
<path d="M66 405H80M66 447H80M83 408V440M101 417V440H95" stroke="#ff2818" stroke-width="1" fill="none"/><path d="M83.0 409.0L84.8 415.0L81.2 415.0Z" fill="#ff2818"/><path d="M83.0 440.0L81.2 434.0L84.8 434.0Z" fill="#ff2818"/>
<path d="M73 410V440" stroke="#111" stroke-width="1.2"/><path d="M73.0 409.0L74.8 415.0L71.2 415.0Z" fill="#111"/><path d="M73.0 440.0L71.2 434.0L74.8 434.0Z" fill="#111"/>
</g></svg>
<div class="tab" style="left:688px;top:79px;width:78px">Measure Type</div>
<div class="box" style="left:685px;top:96px;width:153px;height:41px"></div>
<div class="tab" style="left:688px;top:141px;width:49px">Element</div>
<div class="box" style="left:685px;top:158px;width:153px;height:105px"></div>
<div class="tab" style="left:688px;top:267px;width:49px">Method</div>
<div class="box" style="left:685px;top:284px;width:153px;height:73px"></div>
<div class="tab" style="left:688px;top:361px;width:58px">Construct</div>
<div class="box" style="left:685px;top:378px;width:153px;height:179px"></div>
<div class="sel" style="left:690px;top:100px;width:26px;height:25px"></div>
<div class="sel" style="left:716px;top:162px;width:26px;height:26px"></div>
<div class="sel" style="left:690px;top:288px;width:26px;height:25px"></div>
<svg style="left:680px;top:70px" width="170" height="500" viewBox="680 70 170 500"><g><path d="M694 108l5-3l8 1l3 3v9l-5 3l-9-2l-2-3z" fill="#8a8a8a" stroke="#444" stroke-width=".8"/><circle cx="699" cy="115" r="4.5" fill="#333" stroke="#bbb"/><circle cx="699" cy="115" r="2" fill="#111"/><path d="M701 105l4-1l3 2l-1 2z" fill="#bbb"/></g><circle cx="703" cy="175" r="3" fill="#1e6fc0"/><path d="M720 184l16-18" stroke="#1e6fc0" stroke-width="2.6"/><circle cx="756" cy="175" r="8.5" fill="none" stroke="#1e6fc0" stroke-width="1.6"/><path d="M776 182v-16q15 1 16 16z" fill="none" stroke="#1e6fc0" stroke-width="1.6"/><circle cx="776" cy="182" r="1.8" fill="#e22"/><ellipse cx="810.5" cy="175" rx="8.5" ry="5" fill="none" stroke="#1e6fc0" stroke-width="1.6"/><rect x="694" y="202" width="17" height="10" fill="none" stroke="#1e6fc0" stroke-width="1.8"/><rect x="721" y="202" width="17" height="10" rx="5" fill="none" stroke="#1e6fc0" stroke-width="1.8"/><circle cx="756" cy="207" r="8.5" fill="none" stroke="#1e6fc0" stroke-width="1.5"/><circle cx="756" cy="207" r="4.5" fill="none" stroke="#1e6fc0" stroke-width="1.5"/><path d="M774 211q5-9 9-3t9-6" fill="none" stroke="#1e6fc0" stroke-width="1.6"/><path d="M803 209q-2-6 4-7q4-3 9-3q4 2 0 6q-2 4-5 8q-6 2-8-4z" fill="none" stroke="#1e6fc0" stroke-width="1.6"/><path d="M693 231h18M693 237h18" stroke="#2a8ad8" stroke-width="2.4"/><path d="M693 245h18" stroke="#1a3a9a" stroke-width="2.6"/><path d="M702 233v10" stroke="#d22" stroke-width="1.4"/><path d="M694 291l18 18M694 309l18-18M703 288v24M691 300h24" stroke="#1e6fc0" stroke-width="1"/><circle cx="703" cy="300" r="1.5" fill="#e22"/><path d="M722 300l8-8l8 8l-8 8z" fill="none" stroke="#1e6fc0" stroke-width="1.3"/><path d="M733 292l4 4M727 308l-3-3" stroke="#1e6fc0" stroke-width="1.3"/><g fill="none" stroke="#1e6fc0" stroke-width="1" opacity=".8"><path d="M749 303l4-4l4 4l-4 4zM757 296l4-4l4 4l-4 4z"/></g><path d="M784 290v18M776 299h14" stroke="#1e6fc0" stroke-width="1.3"/><path d="M786 301l6 3l-2 1l2 3l-1 1l-2-3l-2 2z" fill="#1e6fc0"/><path d="M803 307l16-14M806 293l8 10" stroke="#1e6fc0" stroke-width="1.2"/><circle cx="811" cy="300" r="2" fill="#e22"/><text x="801" y="297" font-size="9" fill="#1e6fc0">*</text><path d="M703 322v20M693 332h20" stroke="#1e6fc0" stroke-width="1"/><circle cx="729.5" cy="332" r="8" fill="none" stroke="#3a3a8a" stroke-width="1.3"/><rect x="748" y="323" width="16" height="18" fill="none" stroke="#2a9ad8" stroke-width="1.2"/><circle cx="756" cy="324" r="1.8" fill="#e22"/><circle cx="756" cy="333" r="1.8" fill="#e22"/><path d="M750 340l6-7l6 7" fill="none" stroke="#2a9ad8" stroke-width=".8"/><circle cx="784" cy="332" r="8" fill="none" stroke="#666" stroke-width="2"/><circle cx="784" cy="332" r="3" fill="#666"/><circle cx="703" cy="394" r="1.8" fill="#1e6fc0"/><path d="M722 402l16-16" stroke="#1e6fc0" stroke-width="2"/><circle cx="722" cy="402" r="2" fill="#e22"/><circle cx="738" cy="386" r="2" fill="#e22"/><circle cx="756.5" cy="394" r="8.5" fill="none" stroke="#1e6fc0" stroke-width="1.4"/><circle cx="756.5" cy="394" r="1.6" fill="#e22"/><path d="M776 402q2-12 16-16" fill="none" stroke="#1e6fc0" stroke-width="1.4"/><circle cx="776" cy="402" r="1.6" fill="#e22"/><circle cx="782" cy="392" r="1.6" fill="#e22"/><circle cx="792" cy="386" r="1.6" fill="#e22"/><ellipse cx="810.5" cy="394" rx="9" ry="4.5" fill="none" stroke="#1e6fc0" stroke-width="1.3"/><circle cx="802" cy="394" r="1.3" fill="#e22"/><circle cx="819" cy="394" r="1.3" fill="#e22"/><circle cx="810.5" cy="389.5" r="1.3" fill="#e22"/><circle cx="810.5" cy="398.5" r="1.3" fill="#e22"/><rect x="694" y="421" width="17" height="10" fill="none" stroke="#1e6fc0" stroke-width="1.2"/><circle cx="694" cy="426" r="1.3" fill="#e22"/><circle cx="711" cy="426" r="1.3" fill="#e22"/><circle cx="702" cy="421" r="1.3" fill="#e22"/><circle cx="702" cy="431" r="1.3" fill="#e22"/><path d="M721 418v17M738 418v17M721 426h17M724 423.500l-3 2.500l3 2.500M735 423.500l3 2.500l-3 2.5" stroke="#2a9ad8" stroke-width="1.3" fill="none"/><path d="M749 434h16M751 434l12-15M757 425q5 3 4 9" stroke="#2a9ad8" stroke-width="1.3" fill="none"/><circle cx="784" cy="426" r="8.5" fill="none" stroke="#1e6fc0" stroke-width="2"/><circle cx="784" cy="426" r="4.5" fill="none" stroke="#1e6fc0" stroke-width="1.6"/><rect x="802" y="421.5" width="17" height="9" rx="4.5" fill="none" stroke="#1e6fc0" stroke-width="1.3"/><circle cx="806" cy="421.5" r="1.3" fill="#e22"/><circle cx="815" cy="421.5" r="1.3" fill="#e22"/><circle cx="806" cy="430.5" r="1.3" fill="#e22"/><circle cx="815" cy="430.5" r="1.3" fill="#e22"/><path d="M693 458l10-5l9 8l-9 5z" fill="#3a9ae0"/><path d="M702 451v6" stroke="#1aa06a" stroke-width="1.2"/><path d="M730 450l-10 14q10 4 19 0z" fill="#2a7ac8"/><path d="M748 463q4-10 8-5t9-7" fill="none" stroke="#4a8ad0" stroke-width="1.2"/><circle cx="748" cy="463" r="1.3" fill="#e22"/><circle cx="756" cy="457" r="1.3" fill="#e22"/><circle cx="765" cy="452" r="1.3" fill="#e22"/><path d="M776 461q-2-5 3-7q4-4 9-3q4 2 0 6q-1 5-5 8q-6 1-7-4z" fill="none" stroke="#1e6fc0" stroke-width="1.3"/><circle cx="776" cy="461" r="1.3" fill="#e22"/><circle cx="784" cy="451" r="1.3" fill="#e22"/><circle cx="791" cy="456" r="1.3" fill="#e22"/><circle cx="783" cy="465" r="1.3" fill="#e22"/></svg>
<div class="ptitle" style="left:843px;top:77px;width:325px">Coordiate Display<b>&#x2715;</b></div>
<div class="pbody" style="left:843px;top:97px;width:325px;height:193px"></div>
<div class="cbtn" style="left:848px;top:106px;width:48px;height:47px;font-size:29px;line-height:45px;color:#eaf7ef;-webkit-text-stroke:1px #2fa860;text-shadow:1px 1px 0 #8fd0a8">X</div>
<div class="disp" style="left:898px;top:106px;width:215px;height:47px"><span class="sign">&#8722;</span><span class="dig">0.0770</span></div>
<div class="cbtn" style="left:1115px;top:106px;width:48px;height:47px;font-size:15px;line-height:40px">X<span style="font-size:17px;position:relative;top:5px">/<span style="font-size:15px;position:relative;top:3px">2</span></span></div>
<div class="cbtn" style="left:848px;top:159px;width:48px;height:47px;font-size:29px;line-height:45px;color:#eaf7ef;-webkit-text-stroke:1px #2fa860;text-shadow:1px 1px 0 #8fd0a8">Y</div>
<div class="disp" style="left:898px;top:159px;width:215px;height:47px"><span class="sign">+</span><span class="dig">0.0755</span></div>
<div class="cbtn" style="left:1115px;top:159px;width:48px;height:47px;font-size:15px;line-height:40px">Y<span style="font-size:17px;position:relative;top:5px">/<span style="font-size:15px;position:relative;top:3px">2</span></span></div>
<div class="cbtn" style="left:848px;top:212px;width:48px;height:47px;font-size:29px;line-height:45px;color:#eaf7ef;-webkit-text-stroke:1px #2fa860;text-shadow:1px 1px 0 #8fd0a8">Z</div>
<div class="disp" style="left:898px;top:212px;width:215px;height:47px"><span class="sign">+</span><span class="dig">0.0000</span></div>
<div class="cbtn" style="left:1115px;top:212px;width:48px;height:47px;font-size:15px;line-height:40px">Z<span style="font-size:17px;position:relative;top:5px">/<span style="font-size:15px;position:relative;top:3px">2</span></span></div>
<div class="ptitle" style="left:1172px;top:77px;width:213px">Other<b>&#x2715;</b></div>
<div class="pbody" style="left:1172px;top:97px;width:213px;height:193px"></div>
<div class="ptitle" style="left:1389px;top:77px;width:211px">Zoom Window-3.0x<b>&#x2715;</b></div>
<svg style="left:1389px;top:96px" width="211" height="194" viewBox="1389 96 211 194"><defs><filter id="zb"><feGaussianBlur stdDeviation="5"/></filter><filter id="zb1"><feGaussianBlur stdDeviation="1.2"/></filter><clipPath id="zc"><rect x="1389" y="96" width="211" height="194"/></clipPath></defs>
<g clip-path="url(#zc)"><rect x="1389" y="96" width="211" height="194" fill="#0b170c"/>
<circle cx="1409" cy="111" r="44" fill="#1a7a26" filter="url(#zb)"/><circle cx="1562" cy="285" r="46" fill="#1a7a26" filter="url(#zb)"/>
<circle cx="1409" cy="111" r="36.5" fill="#42bd50" filter="url(#zb1)"/><circle cx="1562" cy="285" r="38.5" fill="#4cc45a" filter="url(#zb1)"/>
<path d="M1486 193h6M1497 193h6M1494.5 185v6M1494.5 195v6" stroke="#e02020" stroke-width="1"/></g></svg>
<div class="a" style="left:843px;top:293px;width:757px;height:30px;background:linear-gradient(#e0e2e6,#cbced3 50%,#aeb1b7)"></div>
<div class="sel" style="left:1307px;top:295px;width:26px;height:26px"></div>
<svg style="left:843px;top:293px" width="757" height="30" viewBox="843 293 757 30"><g stroke="#1a9a4a" stroke-width="1.1" fill="none"><path d="M850 317h17M851 314l10-15M858 304q5 3 5 10M861.5 311l1.5 3l2-2.5"/><path d="M880 301l13 14M877 304l6-6M890 318l6-6M880 301l1 3.500M880 301l3.5 1M893 315l-3.5-1M893 315l-1-3.5"/><path d="M904 299v19M922 299v19M905 308h16M908 305.500l-3 2.500l3 2.500M918 305.500l3 2.500l-3 2.5"/><path d="M930 300h19M930 317h19M939.5 301v15M937 304l2.5-3l2.5 3M937 313l2.5 3l2.5-3"/><circle cx="966.5" cy="308" r="8"/><path d="M966.5 308l-5-5M961.5 305.500v-2.500h2.5"/><circle cx="993.5" cy="308" r="8"/><path d="M988 314l11-12M988 311v3h3M999 305v-3h-3"/><path d="M1012 316q1-12 14-15M1017 318q1-9 11-11M1015 315l2 3l3-2M1025 305l3 2l-2 3"/></g><circle cx="1012" cy="316" r="1.4" fill="#e22"/><circle cx="1026" cy="301" r="1.4" fill="#e22"/><circle cx="1017" cy="305" r="1.2" fill="#e22"/><path d="M1042 300l16 16M1043 314l12-13M1049 299v10M1042 307h13" stroke="#2a7ad0" stroke-width=".9"/><circle cx="1049" cy="307" r="1.2" fill="#e22"/><path d="M1065 306h6l-3 4z" fill="#444"/><path d="M1077.5 298v20" stroke="#444"/><path d="M1078.5 298v20" stroke="#eee"/><g stroke="#1a3ad0" stroke-width="1.6" fill="none"><path d="M1086 304v-4h4M1100 300h4v4M1086 312v4h4M1100 316h4v-4"/></g><circle cx="1097" cy="305" r="4" fill="#eef" stroke="#1a9a4a" stroke-width="1.3"/><path d="M1094 308l-5 6" stroke="#1a9a4a" stroke-width="2"/><g stroke="#f07a20" stroke-width="1.5" fill="none"><path d="M1113 303v-4h4M1128 299h4v4M1113 313v4h4M1128 317h4v-4"/></g><text x="1116.5" y="315" font-size="17" fill="#1a1ad0" stroke="#1a1ad0" stroke-width=".5">A</text><g stroke="#1a9a4a" stroke-width="2.5" fill="none"><path d="M1143 311a7 7 0 0 1 9-9M1156 306a7 7 0 0 1-9 9"/></g><path d="M1150 298l5 4l-6 3zM1149 319l-5-4l6-3z" fill="#1a9a4a"/><circle cx="1149.5" cy="308.5" r="3.5" fill="#8c8"/><path d="M1168 307q7-8 17 1q-8 7-17-1z" fill="#2a2418"/><ellipse cx="1173" cy="308" rx="3" ry="4" fill="#111"/><path d="M1168 304q8-6 17 2M1170 313q8 3 15-4" stroke="#2a9a4a" stroke-width=".9" fill="none"/><path d="M1201 300v11" stroke="#1a8a9a" stroke-width="1.3"/><path d="M1199 302l2-4l2 4z" fill="#1a6a8a"/><path d="M1201 311h9" stroke="#d22" stroke-width="1.3"/><path d="M1208 309l4 2l-4 2z" fill="#d22"/><path d="M1201 311l-5 5M1196 313v3h3" stroke="#2a9ad0" stroke-width="1.1" fill="none"/><rect x="1221" y="300" width="12" height="12" fill="none" stroke="#3a3ad0" stroke-width="1.2" stroke-dasharray="1.5 1.5"/><circle cx="1232" cy="311" r="3.5" fill="#efe" stroke="#1a9a4a" stroke-width="1.3"/><path d="M1234.5 313.500l4 4" stroke="#1a9a4a" stroke-width="2"/><text x="1249" y="310" font-size="11" font-weight="bold" fill="#2a2a7a" font-family='"Liberation Serif",serif'>X</text><text x="1257" y="316" font-size="11" font-weight="bold" fill="#2a2a7a" font-family='"Liberation Serif",serif'>Y</text><path d="M1275 298v20" stroke="#444"/><path d="M1276 298v20" stroke="#eee"/><circle cx="1292.5" cy="308" r="7.5" fill="none" stroke="#8088c8" stroke-width="2.2" stroke-dasharray="2.2 1.3"/><circle cx="1292.5" cy="308" r="5.2" fill="none" stroke="#9aa0d8" stroke-width="2.6"/><ellipse cx="1316" cy="304" rx="4" ry="3" fill="#c22" transform="rotate(-35 1316 304)"/><ellipse cx="1323" cy="313" rx="4" ry="3" fill="#c22" transform="rotate(-35 1323 313)"/><path d="M1312 307q2-5 7-6M1319 316q2-5 7-6" stroke="#2a5ab0" stroke-width="1.6" fill="none"/><path d="M1338 302l6-1l9 7q2 5-3 7q-6 0-12-9z" fill="#f2d2a8" stroke="#3a8ad8" stroke-width="1.2"/><path d="M1340 304l8 7M1342 302l8 7M1345 302l7 6" stroke="#3a8ad8" stroke-width=".8"/><rect x="1370" y="300" width="9" height="9" fill="#445"/><path d="M1366 309h15v7h-15z" fill="#eef" stroke="#3a6ad0"/><rect x="1373" y="304" width="5" height="6" fill="#89a"/></svg>
<svg style="left:0;top:0" width="1600" height="900" viewBox="0 0 1600 900"><defs><clipPath id="cvc"><rect x="844" y="323" width="756" height="518"/></clipPath></defs><rect x="843" y="323" width="757" height="518" fill="#fff"/><rect x="843" y="323" width="1.5" height="518" fill="#444"/><g clip-path="url(#cvc)"><path d="M944.0 346.4L1319.4 371.4L1315.3 441.4L1251.6 494.4A24.8 24.8 0 0 0 1284.5 535.4L1365.8 465.0L1372.0 374.7L1393.0 379.0L1554.0 487.0L1545.8 628.0L1476.4 625.0L1473.6 658.9L1543.6 664.4L1538.9 723.6L1487.5 720.0L1484.7 754.0L1537.5 758.3L1534.7 791.0M1533.5 800.0A20.0 20.0 0 0 1 1515.3 817.2L1395.3 808.9M1382.8 805.6A78.5 78.5 0 0 0 1254.7 746.7A101.0 101.0 0 0 0 1085.8 787.5L906.0 775.6A19.0 19.0 0 0 1 889.4 757.0L891.4 715.0L942.8 718.6L944.0 684.0L894.0 679.7L897.0 620.5L967.0 625.0L968.0 589.4L899.7 585.8L906.7 526.0L975.0 529.6L977.0 495.7L908.0 492.0L909.4 431.0L964.4 434.6L967.0 399.2L913.0 396.0L914.4 368.0A27.0 27.0 0 0 1 944.0 346.4" fill="none" stroke="#555" stroke-width="1"/><circle cx="1074" cy="425" r="34.3" fill="none" stroke="#555" stroke-width="1"/><circle cx="1131" cy="490" r="25.7" fill="none" stroke="#555" stroke-width="1"/><circle cx="1460" cy="491" r="25.8" fill="none" stroke="#555" stroke-width="1"/><circle cx="1188.4" cy="555" r="16.8" fill="none" stroke="#555" stroke-width="1"/><circle cx="1349.2" cy="588" r="17.3" fill="none" stroke="#555" stroke-width="1"/><circle cx="1244.4" cy="620" r="13.4" fill="none" stroke="#555" stroke-width="1"/><circle cx="1445.8" cy="699.2" r="13.2" fill="none" stroke="#555" stroke-width="1"/><path d="M1123.3 565.2L1024.5 651.7A17.0 17.0 0 0 0 1046.9 677.3L1145.7 590.8A17.0 17.0 0 0 0 1123.3 565.2Z" fill="none" stroke="#555" stroke-width="1"/><path d="M1319.4 371.4L1315.3 441.4" stroke="#f09a18" stroke-width="2.2"/><path d="M1218 588h9M1222.5 583.500v9" stroke="#000" stroke-width="1"/><g opacity="1"><path d="M856.7 327.5H913.6M913.6 327.5L924.7 347" stroke="#c81414" stroke-width="1.2" fill="none"/><path d="M924.7 347.0L918.2 339.8L921.8 337.7Z" fill="#c81414"/><text x="857" y="325" font-size="13.1" fill="#c81414" font-family='"Liberation Sans",sans-serif'>R0.2677</text></g><g opacity="1"><path d="M1117 383H1173M1117 383L1099.7 400" stroke="#c81414" stroke-width="1.2" fill="none"/><path d="M1099.7 400.0L1105.0 391.8L1107.9 394.8Z" fill="#c81414"/><text x="1117.8" y="379" font-size="13.1" fill="#c81414" font-family='"Liberation Sans",sans-serif'>D0.6863</text></g><g opacity="0.75"><path d="M1168 454H1224.7M1168 454L1151 470" stroke="#c81414" stroke-width="1.2" fill="none"/><path d="M1151.0 470.0L1156.5 462.0L1159.4 465.0Z" fill="#c81414"/><text x="1168.6" y="449.7" font-size="13.1" fill="#c81414" font-family='"Liberation Sans",sans-serif'>D0.5145</text></g><g opacity="1"><path d="M1496 454.7H1552.8M1496 454.7L1478.6 472" stroke="#c81414" stroke-width="1.2" fill="none"/><path d="M1478.6 472.0L1483.9 463.8L1486.8 466.8Z" fill="#c81414"/><text x="1496.7" y="450.5" font-size="13.1" fill="#c81414" font-family='"Liberation Sans",sans-serif'>D0.5156</text></g><g opacity="0.7"><path d="M1214 525.3H1275M1214 525.3L1214 525.3" stroke="#c81414" stroke-width="1.2" fill="none"/><path d="M1214.0 525.3L1214.0 525.3L1214.0 525.3Z" fill="#c81414"/><text x="1219" y="521" font-size="13.1" fill="#c81414" font-family='"Liberation Sans",sans-serif'>D0.3436</text></g><g opacity="1"><path d="M1165 544.4H1225M1225 544.4L1243 532.5" stroke="#c81414" stroke-width="1.2" fill="none"/><path d="M1243.0 532.5L1236.2 539.5L1233.9 536.0Z" fill="#c81414"/><text x="1168.6" y="540" font-size="13.1" fill="#c81414" font-family='"Liberation Sans",sans-serif'>R0.2553</text></g><g opacity="1"><path d="M1162 547.8H1222M1162 547.8L1147 564.4" stroke="#c81414" stroke-width="1.2" fill="none"/><path d="M1147.0 564.4L1151.8 555.9L1154.9 558.8Z" fill="#c81414"/><text x="1165" y="543.6" font-size="13.1" fill="#c81414" font-family='"Liberation Sans",sans-serif'>R0.1721</text></g><g opacity="1"><path d="M1378 557.5H1436M1378 557.5L1362 574" stroke="#c81414" stroke-width="1.2" fill="none"/><path d="M1362.0 574.0L1367.1 565.7L1370.1 568.6Z" fill="#c81414"/><text x="1380" y="553.3" font-size="13.1" fill="#c81414" font-family='"Liberation Sans",sans-serif'>D0.3428</text></g><g opacity="1"><path d="M1271 593H1329M1271 593L1255.6 609.4" stroke="#c81414" stroke-width="1.2" fill="none"/><path d="M1255.6 609.4L1260.6 601.0L1263.6 603.9Z" fill="#c81414"/><text x="1272.8" y="588.6" font-size="13.1" fill="#c81414" font-family='"Liberation Sans",sans-serif'>D0.2586</text></g><g opacity="1"><path d="M1472 671.4H1529.7M1472 671.4L1457 687.5" stroke="#c81414" stroke-width="1.2" fill="none"/><path d="M1457.0 687.5L1461.9 679.1L1465.0 682.0Z" fill="#c81414"/><text x="1473.6" y="667.5" font-size="13.1" fill="#c81414" font-family='"Liberation Sans",sans-serif'>D0.2588</text></g><g opacity="1"><path d="M1348.6 715.8H1405.6M1348.6 715.8L1338.9 736.7" stroke="#c81414" stroke-width="1.2" fill="none"/><path d="M1338.9 736.7L1341.0 727.2L1344.8 729.0Z" fill="#c81414"/><text x="1349.4" y="711.7" font-size="13.1" fill="#c81414" font-family='"Liberation Sans",sans-serif'>R0.7855</text></g><g opacity="1"><path d="M1095.6 695.8H1152M1152 695.8L1158 718.6" stroke="#c81414" stroke-width="1.2" fill="none"/><path d="M1158.0 718.6L1153.6 709.9L1157.6 708.9Z" fill="#c81414"/><text x="1096" y="692" font-size="13.1" fill="#c81414" font-family='"Liberation Sans",sans-serif'>R1.0101</text></g><g opacity="1"><path d="M950 695H1008M1008 695L1022.5 679" stroke="#c81414" stroke-width="1.2" fill="none"/><path d="M1022.5 679.0L1017.7 687.4L1014.6 684.6Z" fill="#c81414"/><text x="950.6" y="690.8" font-size="13.1" fill="#c81414" font-family='"Liberation Sans",sans-serif'>R0.1722</text></g><g opacity="1"><path d="M820 786.7H877.5M877.5 786.7L893.6 771.4" stroke="#c81414" stroke-width="1.2" fill="none"/><path d="M893.6 771.4L888.2 779.5L885.3 776.4Z" fill="#c81414"/><text x="821.5" y="783" font-size="13.1" fill="#c81414" font-family='"Liberation Sans",sans-serif'>R0.2416</text></g><g opacity="1"><path d="M1540 827.8H1600M1540 827.8L1527 810.6" stroke="#c81414" stroke-width="1.2" fill="none"/><path d="M1527.0 810.6L1534.4 816.9L1531.1 819.4Z" fill="#c81414"/><text x="1544.4" y="824.4" font-size="13.1" fill="#c81414" font-family='"Liberation Sans",sans-serif'>R0.2730</text></g><path d="M1367 412A53 53 0 0 0 1327 503" stroke="#666" stroke-width="1" fill="none" stroke-dasharray="2.5 1.5"/><path d="M1367.5 429A36 36 0 0 0 1339 489" stroke="#c81414" stroke-width="1.2" fill="none"/><path d="M1365.8 461.500l3 3.500l-3 3.500l-3-3.500z" fill="#c81414"/><text transform="translate(1317 480) rotate(-63)" font-size="13.1" fill="#c81414">A135.0509</text><text transform="translate(944 418) rotate(-90)" text-anchor="middle" font-size="12.8" fill="#c81414" opacity="1">L0.3433</text><path d="M940 398H960M940 433H960M948 398V433" stroke="#c81414" stroke-width="1.2" fill="none"/><path d="M948.0 398.0L950.0 405.0L946.0 405.0Z" fill="#c81414"/><path d="M948.0 433.0L946.0 426.0L950.0 426.0Z" fill="#c81414"/><text transform="translate(919 512) rotate(-90)" text-anchor="middle" font-size="12.8" fill="#c81414" opacity="1">L0.3453</text><path d="M916 493H940M916 527H940M924 493V527" stroke="#c81414" stroke-width="1.2" fill="none"/><path d="M924.0 493.0L926.0 500.0L922.0 500.0Z" fill="#c81414"/><path d="M924.0 527.0L922.0 520.0L926.0 520.0Z" fill="#c81414"/><path d="M940.5 493V527" stroke="#666" stroke-dasharray="2 2"/><circle cx="940.5" cy="493" r="2" fill="#888"/><circle cx="940.5" cy="527" r="2" fill="#888"/><text transform="translate(920 606) rotate(-90)" text-anchor="middle" font-size="12.8" fill="#c81414" opacity="1">L0.3434</text><path d="M917 588H934M917 622H934M925 588V622" stroke="#c81414" stroke-width="1.2" fill="none"/><path d="M925.0 588.0L927.0 595.0L923.0 595.0Z" fill="#c81414"/><path d="M925.0 622.0L923.0 615.0L927.0 615.0Z" fill="#c81414"/><path d="M934 588V622" stroke="#666" stroke-dasharray="2 2"/><circle cx="934" cy="588" r="2" fill="#888"/><circle cx="934" cy="622" r="2" fill="#888"/><text transform="translate(928 703) rotate(-90)" text-anchor="middle" font-size="12.8" fill="#c81414" opacity="1">L0.3451</text><path d="M923 682H936M923 716H936M931 682V716" stroke="#c81414" stroke-width="1.2" fill="none"/><path d="M931.0 682.0L933.0 689.0L929.0 689.0Z" fill="#c81414"/><path d="M931.0 716.0L929.0 709.0L933.0 709.0Z" fill="#c81414"/><path d="M873 810V792" stroke="#18c018" stroke-width="2.5"/><path d="M869 794l4-7l4 7z" fill="#18c018"/><path d="M873 810.500H892" stroke="#d01818" stroke-width="2.5"/><path d="M890 806l7 4.500l-7 4.500z" fill="#d01818"/><circle cx="872.5" cy="810.5" r="4.5" fill="#1010c0"/><text x="873" y="785" font-size="12" font-family='"Liberation Serif",serif'>X</text><text x="871" y="808" font-size="10" font-family='"Liberation Serif",serif'>Y</text><text x="899" y="812" font-size="12" font-family='"Liberation Serif",serif'>W</text></g></svg>
<div class="ptitle" style="left:0;top:563px;width:298px">Element List<b>&#x2715;</b></div>
<div class="a" style="left:0;top:583px;width:298px;height:258px;background:#fff"></div>
<div class="a" style="left:0;top:583px;width:16px;height:258px;background:#c6c6c6"></div>
<div class="a" style="left:16px;top:583px;width:250px;height:16px;background:#3399ff"></div>
<svg style="left:0;top:583px" width="300" height="258" viewBox="0 583 300 258"><text x="32" y="595" font-size="10.2">LIN26</text><text x="102" y="595" font-size="10.2">LIN26</text><text x="264.5" y="595" font-size="10.2" text-anchor="end">35</text><rect x="267.5" y="585.5" width="11" height="11" fill="#e8e8e8" stroke="#8a8a8a"/><path d="M269.5 591l3 3.500l5.5-8" stroke="#666" stroke-width="1.8" fill="none"/><path d="M20 596l6-8" stroke="#e8f0ff" stroke-width="1"/><rect x="18" y="594.5" width="3" height="3" fill="none" stroke="#f4f8ff"/><rect x="25" y="586.5" width="3" height="3" fill="none" stroke="#f4f8ff"/><text x="32" y="611" font-size="10.2">ARC3</text><text x="102" y="611" font-size="10.2">ARC3</text><text x="264.5" y="611" font-size="10.2" text-anchor="end">36</text><rect x="267.5" y="601.5" width="11" height="11" fill="#e8e8e8" stroke="#8a8a8a"/><path d="M269.5 607l3 3.500l5.5-8" stroke="#666" stroke-width="1.8" fill="none"/><path d="M19 612q1-8 8-9" stroke="#555" stroke-width="1" fill="none"/><rect x="17.5" y="611" width="2.5" height="2.5" fill="none" stroke="#7a5ab0"/><rect x="21" y="604.5" width="2.5" height="2.5" fill="none" stroke="#7a5ab0"/><rect x="26" y="601.5" width="2.5" height="2.5" fill="none" stroke="#7a5ab0"/><text x="32" y="627" font-size="10.2">ARC4</text><text x="102" y="627" font-size="10.2">ARC4</text><text x="264.5" y="627" font-size="10.2" text-anchor="end">37</text><rect x="267.5" y="617.5" width="11" height="11" fill="#e8e8e8" stroke="#8a8a8a"/><path d="M269.5 623l3 3.500l5.5-8" stroke="#666" stroke-width="1.8" fill="none"/><path d="M19 628q1-8 8-9" stroke="#555" stroke-width="1" fill="none"/><rect x="17.5" y="627" width="2.5" height="2.5" fill="none" stroke="#7a5ab0"/><rect x="21" y="620.5" width="2.5" height="2.5" fill="none" stroke="#7a5ab0"/><rect x="26" y="617.5" width="2.5" height="2.5" fill="none" stroke="#7a5ab0"/><text x="32" y="643" font-size="10.2">LIN27</text><text x="102" y="643" font-size="10.2">LIN27</text><text x="264.5" y="643" font-size="10.2" text-anchor="end">38</text><rect x="267.5" y="633.5" width="11" height="11" fill="#e8e8e8" stroke="#8a8a8a"/><path d="M269.5 639l3 3.500l5.5-8" stroke="#666" stroke-width="1.8" fill="none"/><path d="M20 644l6-8" stroke="#666" stroke-width="1"/><rect x="18" y="642.5" width="3" height="3" fill="none" stroke="#7a5ab0"/><rect x="25" y="634.5" width="3" height="3" fill="none" stroke="#7a5ab0"/><text x="32" y="659" font-size="10.2">LIN28</text><text x="102" y="659" font-size="10.2">LIN28</text><text x="264.5" y="659" font-size="10.2" text-anchor="end">39</text><rect x="267.5" y="649.5" width="11" height="11" fill="#e8e8e8" stroke="#8a8a8a"/><path d="M269.5 655l3 3.500l5.5-8" stroke="#666" stroke-width="1.8" fill="none"/><path d="M20 660l6-8" stroke="#666" stroke-width="1"/><rect x="18" y="658.5" width="3" height="3" fill="none" stroke="#7a5ab0"/><rect x="25" y="650.5" width="3" height="3" fill="none" stroke="#7a5ab0"/><text x="32" y="675" font-size="10.2">LIN29</text><text x="102" y="675" font-size="10.2">LIN29</text><text x="264.5" y="675" font-size="10.2" text-anchor="end">40</text><rect x="267.5" y="665.5" width="11" height="11" fill="#e8e8e8" stroke="#8a8a8a"/><path d="M269.5 671l3 3.500l5.5-8" stroke="#666" stroke-width="1.8" fill="none"/><path d="M20 676l6-8" stroke="#666" stroke-width="1"/><rect x="18" y="674.5" width="3" height="3" fill="none" stroke="#7a5ab0"/><rect x="25" y="666.5" width="3" height="3" fill="none" stroke="#7a5ab0"/><text x="32" y="691" font-size="10.2">LIN30</text><text x="102" y="691" font-size="10.2">LIN30</text><text x="264.5" y="691" font-size="10.2" text-anchor="end">41</text><rect x="267.5" y="681.5" width="11" height="11" fill="#e8e8e8" stroke="#8a8a8a"/><path d="M269.5 687l3 3.500l5.5-8" stroke="#666" stroke-width="1.8" fill="none"/><path d="M20 692l6-8" stroke="#666" stroke-width="1"/><rect x="18" y="690.5" width="3" height="3" fill="none" stroke="#7a5ab0"/><rect x="25" y="682.5" width="3" height="3" fill="none" stroke="#7a5ab0"/><text x="32" y="707" font-size="10.2">LIN31</text><text x="102" y="707" font-size="10.2">LIN31</text><text x="264.5" y="707" font-size="10.2" text-anchor="end">42</text><rect x="267.5" y="697.5" width="11" height="11" fill="#e8e8e8" stroke="#8a8a8a"/><path d="M269.5 703l3 3.500l5.5-8" stroke="#666" stroke-width="1.8" fill="none"/><path d="M20 708l6-8" stroke="#666" stroke-width="1"/><rect x="18" y="706.5" width="3" height="3" fill="none" stroke="#7a5ab0"/><rect x="25" y="698.5" width="3" height="3" fill="none" stroke="#7a5ab0"/><text x="32" y="723" font-size="10.2">ARC5</text><text x="102" y="723" font-size="10.2">ARC5</text><text x="264.5" y="723" font-size="10.2" text-anchor="end">43</text><rect x="267.5" y="713.5" width="11" height="11" fill="#e8e8e8" stroke="#8a8a8a"/><path d="M269.5 719l3 3.500l5.5-8" stroke="#666" stroke-width="1.8" fill="none"/><path d="M19 724q1-8 8-9" stroke="#555" stroke-width="1" fill="none"/><rect x="17.5" y="723" width="2.5" height="2.5" fill="none" stroke="#7a5ab0"/><rect x="21" y="716.5" width="2.5" height="2.5" fill="none" stroke="#7a5ab0"/><rect x="26" y="713.5" width="2.5" height="2.5" fill="none" stroke="#7a5ab0"/><text x="32" y="739" font-size="10.2">LIN32</text><text x="102" y="739" font-size="10.2">LIN32</text><text x="264.5" y="739" font-size="10.2" text-anchor="end">44</text><rect x="267.5" y="729.5" width="11" height="11" fill="#e8e8e8" stroke="#8a8a8a"/><path d="M269.5 735l3 3.500l5.5-8" stroke="#666" stroke-width="1.8" fill="none"/><path d="M20 740l6-8" stroke="#666" stroke-width="1"/><rect x="18" y="738.5" width="3" height="3" fill="none" stroke="#7a5ab0"/><rect x="25" y="730.5" width="3" height="3" fill="none" stroke="#7a5ab0"/><text x="32" y="755" font-size="10.2">LIN33</text><text x="102" y="755" font-size="10.2">LIN33</text><text x="264.5" y="755" font-size="10.2" text-anchor="end">45</text><rect x="267.5" y="745.5" width="11" height="11" fill="#e8e8e8" stroke="#8a8a8a"/><path d="M269.5 751l3 3.500l5.5-8" stroke="#666" stroke-width="1.8" fill="none"/><path d="M20 756l6-8" stroke="#666" stroke-width="1"/><rect x="18" y="754.5" width="3" height="3" fill="none" stroke="#7a5ab0"/><rect x="25" y="746.5" width="3" height="3" fill="none" stroke="#7a5ab0"/><text x="32" y="771" font-size="10.2">LIN34</text><text x="102" y="771" font-size="10.2">LIN34</text><text x="264.5" y="771" font-size="10.2" text-anchor="end">46</text><rect x="267.5" y="761.5" width="11" height="11" fill="#e8e8e8" stroke="#8a8a8a"/><path d="M269.5 767l3 3.500l5.5-8" stroke="#666" stroke-width="1.8" fill="none"/><path d="M20 772l6-8" stroke="#666" stroke-width="1"/><rect x="18" y="770.5" width="3" height="3" fill="none" stroke="#7a5ab0"/><rect x="25" y="762.5" width="3" height="3" fill="none" stroke="#7a5ab0"/><text x="32" y="787" font-size="10.2">ARC6</text><text x="102" y="787" font-size="10.2">ARC6</text><text x="264.5" y="787" font-size="10.2" text-anchor="end">47</text><rect x="267.5" y="777.5" width="11" height="11" fill="#e8e8e8" stroke="#8a8a8a"/><path d="M269.5 783l3 3.500l5.5-8" stroke="#666" stroke-width="1.8" fill="none"/><path d="M19 788q1-8 8-9" stroke="#555" stroke-width="1" fill="none"/><rect x="17.5" y="787" width="2.5" height="2.5" fill="none" stroke="#7a5ab0"/><rect x="21" y="780.5" width="2.5" height="2.5" fill="none" stroke="#7a5ab0"/><rect x="26" y="777.5" width="2.5" height="2.5" fill="none" stroke="#7a5ab0"/><text x="32" y="803" font-size="10.2">LIN35</text><text x="102" y="803" font-size="10.2">LIN35</text><text x="264.5" y="803" font-size="10.2" text-anchor="end">48</text><rect x="267.5" y="793.5" width="11" height="11" fill="#e8e8e8" stroke="#8a8a8a"/><path d="M269.5 799l3 3.500l5.5-8" stroke="#666" stroke-width="1.8" fill="none"/><path d="M20 804l6-8" stroke="#666" stroke-width="1"/><rect x="18" y="802.5" width="3" height="3" fill="none" stroke="#7a5ab0"/><rect x="25" y="794.5" width="3" height="3" fill="none" stroke="#7a5ab0"/><text x="32" y="819" font-size="10.2">LIN36</text><text x="102" y="819" font-size="10.2">LIN36</text><text x="264.5" y="819" font-size="10.2" text-anchor="end">49</text><rect x="267.5" y="809.5" width="11" height="11" fill="#e8e8e8" stroke="#8a8a8a"/><path d="M269.5 815l3 3.500l5.5-8" stroke="#666" stroke-width="1.8" fill="none"/><path d="M20 820l6-8" stroke="#666" stroke-width="1"/><rect x="18" y="818.5" width="3" height="3" fill="none" stroke="#7a5ab0"/><rect x="25" y="810.5" width="3" height="3" fill="none" stroke="#7a5ab0"/><text x="32" y="835" font-size="10.2">ARC7</text><text x="102" y="835" font-size="10.2">ARC7</text><text x="264.5" y="835" font-size="10.2" text-anchor="end">50</text><rect x="267.5" y="825.5" width="11" height="11" fill="#e8e8e8" stroke="#8a8a8a"/><path d="M269.5 831l3 3.500l5.5-8" stroke="#666" stroke-width="1.8" fill="none"/><path d="M19 836q1-8 8-9" stroke="#555" stroke-width="1" fill="none"/><rect x="17.5" y="835" width="2.5" height="2.5" fill="none" stroke="#7a5ab0"/><rect x="21" y="828.5" width="2.5" height="2.5" fill="none" stroke="#7a5ab0"/><rect x="26" y="825.5" width="2.5" height="2.5" fill="none" stroke="#7a5ab0"/></svg>
<div class="a" style="left:282px;top:583px;width:15px;height:258px;background:#f0f0f0"></div>
<div class="a" style="left:283px;top:734px;width:13px;height:61px;background:linear-gradient(90deg,#f4f4f4,#dcdcdc 50%,#cfcfcf);border:1px solid #999;border-radius:2px"></div>
<svg style="left:282px;top:583px" width="15" height="258" viewBox="0 0 15 258"><path d="M4 10l3.5-4l3.5 4zM4 247l3.5 4l3.5-4z" fill="#444"/><path d="M5 179h5M5 181h5M5 183h5" stroke="#555"/></svg>
<div class="ptitle" style="left:302px;top:563px;width:537px">Data Display<b>&#x2715;</b></div>
<div class="a" style="left:302px;top:583px;width:537px;height:258px;background:#c2c2c2"></div>
<div class="a" style="left:306px;top:586px;width:530px;height:197px;background:#fff"></div>
<div class="a" style="left:306px;top:586px;width:99px;height:24px;background:linear-gradient(#b8c6e0 0,#7c90b8 18%,#4a5f88 50%,#223252 85%,#1a2844);border-right:1px solid #dfe4ee;border-left:1px solid #8aa0c8;color:#e8ecf4;font-size:10.500px;text-align:center;line-height:25px;overflow:hidden">Content</div>
<div class="a" style="left:405px;top:586px;width:75px;height:24px;background:linear-gradient(#b8c6e0 0,#7c90b8 18%,#4a5f88 50%,#223252 85%,#1a2844);border-right:1px solid #dfe4ee;border-left:1px solid #8aa0c8;color:#e8ecf4;font-size:10.500px;text-align:center;line-height:25px;overflow:hidden">Actual</div>
<div class="a" style="left:480px;top:586px;width:75px;height:24px;background:linear-gradient(#b8c6e0 0,#7c90b8 18%,#4a5f88 50%,#223252 85%,#1a2844);border-right:1px solid #dfe4ee;border-left:1px solid #8aa0c8;color:#e8ecf4;font-size:10.500px;text-align:center;line-height:25px;overflow:hidden">Nominal</div>
<div class="a" style="left:555px;top:586px;width:75px;height:24px;background:linear-gradient(#b8c6e0 0,#7c90b8 18%,#4a5f88 50%,#223252 85%,#1a2844);border-right:1px solid #dfe4ee;border-left:1px solid #8aa0c8;color:#e8ecf4;font-size:10.500px;text-align:center;line-height:25px;overflow:hidden">Over</div>
<div class="a" style="left:630px;top:586px;width:75px;height:24px;background:linear-gradient(#b8c6e0 0,#7c90b8 18%,#4a5f88 50%,#223252 85%,#1a2844);border-right:1px solid #dfe4ee;border-left:1px solid #8aa0c8;color:#e8ecf4;font-size:10.500px;text-align:center;line-height:25px;overflow:hidden">UpTol</div>
<div class="a" style="left:705px;top:586px;width:75px;height:24px;background:linear-gradient(#b8c6e0 0,#7c90b8 18%,#4a5f88 50%,#223252 85%,#1a2844);border-right:1px solid #dfe4ee;border-left:1px solid #8aa0c8;color:#e8ecf4;font-size:10.500px;text-align:center;line-height:25px;overflow:hidden">LowTol</div>
<div class="a" style="left:780px;top:586px;width:40px;height:24px;background:linear-gradient(#b8c6e0 0,#7c90b8 18%,#4a5f88 50%,#223252 85%,#1a2844);border-right:1px solid #dfe4ee;border-left:1px solid #8aa0c8;color:#e8ecf4;font-size:10.500px;text-align:left;padding-left:14px;line-height:25px;overflow:hidden">State</div>
<svg style="left:302px;top:583px" width="540" height="200" viewBox="302 583 540 200"><defs><clipPath id="ddc"><rect x="306" y="610" width="514" height="172"/></clipPath></defs><g clip-path="url(#ddc)"><path d="M306 625.5H820" stroke="#ececec"/><rect x="311.5" y="612.5" width="10" height="10" fill="#e4e4e4" stroke="#8a8a8a"/><path d="M313 618l3 3.500l6-9" stroke="#666" stroke-width="1.8" fill="none"/><text x="324" y="622" font-size="11.6">Start X</text><text x="480" y="622" font-size="11.7" text-anchor="end">0.8461</text><text x="555" y="622" font-size="11.7" text-anchor="end">0.8461</text><text x="630" y="622" font-size="11.7" text-anchor="end">0.0000</text><path d="M306 641.5H820" stroke="#ececec"/><rect x="311.5" y="628.5" width="10" height="10" fill="#e4e4e4" stroke="#8a8a8a"/><path d="M313 634l3 3.500l6-9" stroke="#666" stroke-width="1.8" fill="none"/><text x="324" y="638" font-size="11.6">Start Y</text><text x="480" y="638" font-size="11.7" text-anchor="end">1.5222</text><text x="555" y="638" font-size="11.7" text-anchor="end">1.5222</text><text x="630" y="638" font-size="11.7" text-anchor="end">0.0000</text><path d="M306 657.5H820" stroke="#ececec"/><rect x="311.5" y="644.5" width="10" height="10" fill="#e4e4e4" stroke="#8a8a8a"/><path d="M313 650l3 3.500l6-9" stroke="#666" stroke-width="1.8" fill="none"/><text x="324" y="654" font-size="11.6">Start Z</text><text x="480" y="654" font-size="11.7" text-anchor="end">0.0000</text><text x="555" y="654" font-size="11.7" text-anchor="end">0.0000</text><text x="630" y="654" font-size="11.7" text-anchor="end">0.0000</text><path d="M306 673.5H820" stroke="#ececec"/><rect x="311.5" y="660.5" width="10" height="10" fill="#e4e4e4" stroke="#8a8a8a"/><path d="M313 666l3 3.500l6-9" stroke="#666" stroke-width="1.8" fill="none"/><text x="324" y="670" font-size="11.6">Direct L</text><text x="480" y="670" font-size="11.7" text-anchor="end">0.0481</text><text x="555" y="670" font-size="11.7" text-anchor="end">0.0481</text><text x="630" y="670" font-size="11.7" text-anchor="end">0.0000</text><path d="M306 689.5H820" stroke="#ececec"/><rect x="311.5" y="676.5" width="10" height="10" fill="#e4e4e4" stroke="#8a8a8a"/><path d="M313 682l3 3.500l6-9" stroke="#666" stroke-width="1.8" fill="none"/><text x="324" y="686" font-size="11.6">Direct M</text><text x="480" y="686" font-size="11.7" text-anchor="end">0.7037</text><text x="555" y="686" font-size="11.7" text-anchor="end">0.7037</text><text x="630" y="686" font-size="11.7" text-anchor="end">0.0000</text><path d="M306 705.5H820" stroke="#ececec"/><rect x="311.5" y="692.5" width="10" height="10" fill="#e4e4e4" stroke="#8a8a8a"/><path d="M313 698l3 3.500l6-9" stroke="#666" stroke-width="1.8" fill="none"/><text x="324" y="702" font-size="11.6">Direct N</text><text x="480" y="702" font-size="11.7" text-anchor="end">0.0000</text><text x="555" y="702" font-size="11.7" text-anchor="end">0.0000</text><text x="630" y="702" font-size="11.7" text-anchor="end">0.0000</text><path d="M306 721.5H820" stroke="#ececec"/><rect x="311.5" y="708.5" width="10" height="10" fill="#e4e4e4" stroke="#8a8a8a"/><path d="M313 714l3 3.500l6-9" stroke="#666" stroke-width="1.8" fill="none"/><text x="324" y="718" font-size="11.6">Length</text><text x="480" y="718" font-size="11.7" text-anchor="end">0.7053</text><text x="555" y="718" font-size="11.7" text-anchor="end">0.7053</text><text x="630" y="718" font-size="11.7" text-anchor="end">0.0000</text><path d="M306 737.5H820" stroke="#ececec"/><rect x="311.5" y="724.5" width="10" height="10" fill="#e4e4e4" stroke="#8a8a8a"/><path d="M313 730l3 3.500l6-9" stroke="#666" stroke-width="1.8" fill="none"/><text x="324" y="734" font-size="11.6">Angle-A</text><text x="480" y="734" font-size="11.7" text-anchor="end">86.0862</text><text x="555" y="734" font-size="11.7" text-anchor="end">86.0862</text><text x="630" y="734" font-size="11.7" text-anchor="end">0.0000</text><path d="M306 753.5H820" stroke="#ececec"/><rect x="311.5" y="740.5" width="10" height="10" fill="#e4e4e4" stroke="#8a8a8a"/><path d="M313 746l3 3.500l6-9" stroke="#666" stroke-width="1.8" fill="none"/><text x="324" y="750" font-size="11.6">+T</text><text x="480" y="750" font-size="11.7" text-anchor="end">0.0188</text><text x="555" y="750" font-size="11.7" text-anchor="end">0.0188</text><text x="630" y="750" font-size="11.7" text-anchor="end">0.0000</text><path d="M306 769.5H820" stroke="#ececec"/><rect x="311.5" y="756.5" width="10" height="10" fill="#e4e4e4" stroke="#8a8a8a"/><path d="M313 762l3 3.500l6-9" stroke="#666" stroke-width="1.8" fill="none"/><text x="324" y="766" font-size="11.6">-T</text><text x="480" y="766" font-size="11.7" text-anchor="end">0.0111</text><text x="555" y="766" font-size="11.7" text-anchor="end">0.0111</text><text x="630" y="766" font-size="11.7" text-anchor="end">0.0000</text><path d="M306 785.5H820" stroke="#ececec"/><rect x="311.5" y="772.5" width="10" height="10" fill="#e4e4e4" stroke="#8a8a8a"/><path d="M313 778l3 3.500l6-9" stroke="#666" stroke-width="1.8" fill="none"/><text x="324" y="782" font-size="11.6">T</text><text x="480" y="782" font-size="11.7" text-anchor="end">0.0299</text><text x="555" y="782" font-size="11.7" text-anchor="end">0.0299</text><text x="630" y="782" font-size="11.7" text-anchor="end">0.0000</text><path d="M405.5 610V783" stroke="#ececec"/><path d="M480.5 610V783" stroke="#ececec"/><path d="M555.5 610V783" stroke="#ececec"/><path d="M630.5 610V783" stroke="#ececec"/><path d="M705.5 610V783" stroke="#ececec"/><path d="M780.5 610V783" stroke="#ececec"/></g></svg>
<div class="a" style="left:820px;top:586px;width:16px;height:197px;background:#f0f0f0"></div>
<div class="a" style="left:822px;top:603px;width:12px;height:84px;background:linear-gradient(90deg,#f4f4f4,#dcdcdc 50%,#cfcfcf);border:1px solid #999;border-radius:2px"></div>
<svg style="left:820px;top:586px" width="16" height="197" viewBox="0 0 16 197"><path d="M4.5 11l3.5-4l3.5 4zM4.5 186l3.5 4l3.5-4z" fill="#444"/><path d="M5.5 56h5M5.5 58h5M5.5 60h5" stroke="#555"/></svg>
<div class="a" style="left:306px;top:783px;width:530px;height:15px;background:#f0f0f0"></div>
<div class="a" style="left:323px;top:784px;width:464px;height:13px;background:linear-gradient(#f6f6f6,#dedede 50%,#cfcfcf);border:1px solid #999;border-radius:2px"></div>
<svg style="left:306px;top:783px" width="530" height="15" viewBox="0 0 530 15"><path d="M10 4l-4 3.500l4 3.500zM503 4l4 3.500l-4 3.500z" fill="#444"/><path d="M246 5v5M248 5v5M250 5v5" stroke="#555"/></svg>
<div class="a" style="left:306px;top:800px;width:530px;height:14px;background:#4c4c4c;border:1px solid #ddd"></div>
<div class="a" style="left:309px;top:802px;width:10px;height:10px;background:#f4f4f4;border:1px solid #999"></div>
<div class="t" style="left:324px;top:802px;font-size:10.500px;color:#111">Show All</div>
<div class="a" style="left:302px;top:817px;width:537px;height:24px;background:#535353"></div>
<div class="a" style="left:305px;top:817px;width:74px;height:21px;background:linear-gradient(#eef4f6,#fff);border:1px solid #cfe0e4;border-top:none;border-radius:0 0 4px 4px"></div>
<div class="t" style="left:310px;top:824px;font-size:11.400px;color:#000">Data Display</div>
<div class="t" style="left:387px;top:824px;font-size:11.400px;color:#fff">Element Copy</div>
<div class="t" style="left:470px;top:824px;font-size:11.400px;color:#fff">Position Tolerance</div>
<div class="t" style="left:577px;top:824px;font-size:11.400px;color:#fff">Image Navigation</div>
<div class="t" style="left:680px;top:824px;font-size:11.400px;color:#fff">User define</div>
<div class="a" style="left:0;top:841px;width:1600px;height:19px;background:linear-gradient(#454545 0,#3a3a3a 40%,#262626 45%,#2c2c2c)"></div>
<div class="a" style="left:987px;top:846px;width:1px;height:12px;background:#888"></div>
<div class="a" style="left:1094px;top:846px;width:1px;height:12px;background:#888"></div>
<div class="a" style="left:1200px;top:846px;width:1px;height:12px;background:#888"></div>
<div class="a" style="left:1306px;top:846px;width:1px;height:12px;background:#888"></div>
<div class="a" style="left:1412px;top:846px;width:1px;height:12px;background:#888"></div>
<div class="a" style="left:1467px;top:846px;width:1px;height:12px;background:#888"></div>
<div class="a" style="left:1544px;top:846px;width:1px;height:12px;background:#888"></div>
<div class="t" style="left:991px;top:847px;font-size:11px;color:#fff">0:00:00:00</div>
<div class="t" style="left:1098px;top:847px;font-size:11px;color:#f0b428">0.7X</div>
<div class="t" style="left:1204px;top:847px;font-size:11px;color:#f0b428">Probe unsettled</div>
<div class="t" style="left:1310px;top:847px;font-size:11px;color:#f0b428">WCS</div>
<div class="t" style="left:1416px;top:847px;font-size:11px;color:#fff">mm</div>
<div class="t" style="left:1472px;top:847px;font-size:11px;color:#fff">DD</div>
<div class="t" style="left:1548px;top:847px;font-size:11px;color:#fff">CARTESIAN</div>
<div class="a" style="left:0;top:860px;width:1600px;height:40px;background:linear-gradient(rgba(255,255,255,.18) 0,rgba(255,255,255,.04) 10%,rgba(0,0,0,0) 50%,rgba(0,0,0,.04)),linear-gradient(90deg,#3a78c8 0,#2f69ba 19%,#3276ca 44%,#3a80d6 64%,#316fc4 80%,#28529e 90%,#244a92);border-top:1px solid #7aa6e4"></div>
<div class="a" style="left:1000px;top:861px;width:500px;height:39px;background:radial-gradient(ellipse 70% 260% at 100% 210%,rgba(90,150,230,0) 70%,rgba(150,195,245,.4) 73%,rgba(90,150,230,0) 80%)"></div>
<div class="a" style="left:122px;top:862px;width:58px;height:38px;border:1px solid rgba(255,255,255,.55);border-radius:3px;background:linear-gradient(rgba(255,255,255,.7),rgba(215,232,255,.55) 50%,rgba(170,208,252,.5))"></div>
<div class="a" style="left:246px;top:862px;width:58px;height:38px;border:1px solid rgba(255,255,255,.55);border-radius:3px;background:linear-gradient(rgba(255,255,255,.7),rgba(215,232,255,.55) 50%,rgba(170,208,252,.5))"></div>
<svg style="left:0;top:860px" width="1600" height="40" viewBox="0 860 1600 40"><defs><radialGradient id="orb" cx=".5" cy=".3" r=".7"><stop offset="0" stop-color="#9fd0f8"/><stop offset=".6" stop-color="#2a6ac0"/><stop offset="1" stop-color="#123a80"/></radialGradient></defs><circle cx="26" cy="880" r="18" fill="url(#orb)" stroke="#a8c8f0" stroke-width="1.2"/><path d="M17 873q4-2 8 0l-1.5 7q-4-2-8 0z" fill="#e8502a"/><path d="M27 873.500q4 2 8 0l-1.5 7q-4 2-8 0z" fill="#7ac030"/><path d="M15 882q4-2 8 0l-1.5 7q-4-2-8 0z" fill="#2a9ae8"/><path d="M25 882.500q4 2 8 0l-1.5 7q-4 2-8 0z" fill="#f8c820"/><circle cx="89" cy="881" r="12" fill="#2a8ae0"/><text x="80" y="890" font-size="26" font-weight="bold" fill="#e8f4ff" font-style="italic">e</text><ellipse cx="89" cy="879" rx="17" ry="6" fill="none" stroke="#f0c030" stroke-width="2.2" transform="rotate(-28 89 879)"/><path d="M136 870h10l3 3h18v22h-31z" fill="#f0d070" stroke="#c8a040"/><rect x="138" y="876" width="27" height="17" fill="#f8e8a0"/><rect x="140" y="884" width="22" height="11" fill="#8ac0f0" stroke="#dff"/><rect x="199" y="870" width="22" height="20" fill="#e8f0fa" stroke="#9ab"/><circle cx="209" cy="880" r="9" fill="#f08020"/><path d="M206 875l8 5l-8 5z" fill="#fff"/><path d="M262 892v-20q0-6 6-6v5q-2 0-2 2v19zM281 866q8 0 8 7h-4q0-3-4-3q-3 0-3 2.500t5 4q6 2 6 8q0 7-8 7v-4q4 0 4-3q0-2.5-5-4t-5-7.500q0-7 7-7z" fill="#1468c0"/><rect x="270" y="866" width="8" height="4" rx="1" fill="#9aa8b4"/><rect x="271" y="870" width="6" height="14" fill="#7f8f9c"/><path d="M271 873h6M271 876h6M271 879h6M271 882h6" stroke="#c8d0d8" stroke-width=".8"/><rect x="267" y="884" width="14" height="7" rx="1" fill="#8a9aa8"/><path d="M269 887.500h10" stroke="#445" stroke-width="1.5" stroke-dasharray="2 1"/><text x="1346" y="883.5" font-size="14.5" fill="#fff" font-family='"Liberation Serif",serif' textLength="16" lengthAdjust="spacingAndGlyphs">CH</text><rect x="1370" y="875" width="14" height="9" rx="1" fill="#ddd" stroke="#888"/><path d="M1377 875q0-4 5-4" stroke="#ddd" fill="none"/><circle cx="1399" cy="878" r="7.5" fill="#2a4ac8" stroke="#dde" stroke-width="1.2"/><text x="1395.5" y="882.5" font-size="12" font-weight="bold" fill="#fff">?</text><rect x="1418" y="867" width="6" height="4" fill="none" stroke="#fff"/><path d="M1418 880h6l-3 3z" fill="#fff"/><path d="M1435 882l4.5-5l4.5 5z" fill="#fff"/><rect x="1458" y="872" width="11" height="9" fill="#dde" stroke="#555"/><path d="M1456 885h14" stroke="#ccc" stroke-width="2"/><path d="M1464 878l8 8M1472 878l-8 8" stroke="#e02020" stroke-width="2"/><path d="M1481 875h3l4-4v14l-4-4h-3z" fill="#eee"/><circle cx="1491" cy="884" r="4" fill="#e03030"/><path d="M1489 882l4 4M1493 882l-4 4" stroke="#fff" stroke-width="1.2"/><text x="1544" y="876" font-size="12" fill="#fff" text-anchor="middle">下午 02:25</text><text x="1544" y="894" font-size="12" fill="#fff" text-anchor="middle">2014/1/16</text><rect x="1586.5" y="861.5" width="13" height="39" fill="#3a62a8" stroke="#86a8dc" opacity=".9"/><rect x="1588" y="863" width="10" height="16" fill="#5a80c0" opacity=".6"/></svg>
<svg width="0" height="0" style="left:0;top:0"><defs><filter id="wmf" x="0" y="0" width="100%" height="100%"><feComponentTransfer in="SourceAlpha" result="sa"><feFuncA type="linear" slope="4"/></feComponentTransfer><feOffset in="sa" dx="2" dy="2" result="o"/><feComposite in="o" in2="sa" operator="out" result="sh"/><feFlood flood-color="#c1c1c1" flood-opacity=".49"/><feComposite in2="sh" operator="in" result="shc"/><feMerge><feMergeNode in="shc"/><feMergeNode in="SourceGraphic"/></feMerge></filter></defs></svg>
<div id="wm" class="t" style="left:118.5px;top:380.5px;font-size:141px;line-height:1.45;letter-spacing:-4.9px;transform:scaleY(.915);transform-origin:0 0;font-family:'Liberation Sans','Noto Sans CJK SC',sans-serif;font-weight:500;color:rgba(232,234,232,.69);filter:url(#wmf)">苏州量子仪器有限公司</div>
</body></html>
